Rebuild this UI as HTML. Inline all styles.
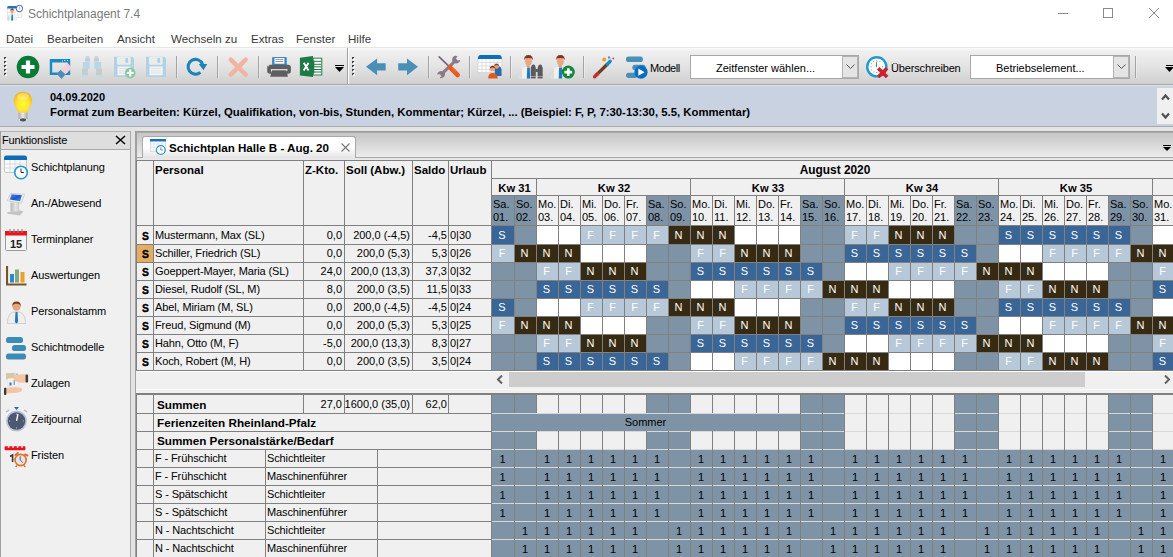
<!DOCTYPE html><html><head><meta charset="utf-8"><style>
*{margin:0;padding:0;box-sizing:border-box}
html,body{width:1173px;height:557px;overflow:hidden;background:#f0f0f0;font-family:"Liberation Sans", sans-serif;font-size:11px;color:#000;position:relative}
.a{position:absolute}
.t{position:absolute;white-space:nowrap;line-height:1}
.r{letter-spacing:-0.12px}
.b{font-weight:bold}

</style></head><body>
<div class="a" style="left:0;top:0;width:1173px;height:47px;background:#fff"></div>
<div class="a" style="left:0;top:47px;width:1173px;height:1px;background:#e6e6e6"></div>
<svg class="a" style="left:4px;top:2px" width="24" height="22" viewBox="0 0 24 22"><rect x="3.4" y="4.2" width="14.4" height="11.2" fill="#fbfbfb" stroke="#d8d8d8" stroke-width="0.6"/><path d="M3.2 8.5 V5.5 Q3.2 4 4.8 4 H17.5 V6.5 H3.2Z" fill="#1a72c0"/><path d="M3.6 10.5h14M3.6 13h14M7 6.5v9M10.5 6.5v9M14 6.5v9" stroke="#e2e2e2" stroke-width="0.5"/><circle cx="15.4" cy="6.5" r="3.2" fill="#fff" stroke="#3068a8" stroke-width="1"/><path d="M15.4 4.8v1.8h1" fill="none" stroke="#777" stroke-width="0.6"/><path d="M3.2 18.6 Q3.2 12.6 8.1 12.6 Q12.6 12.6 12.6 18.6Z" fill="#eeeeee"/><path d="M3.2 18.6 Q3.2 14.5 5 13.3 V18.6Z" fill="#d6d6d6"/><ellipse cx="8.1" cy="9.4" rx="1.5" ry="2.2" fill="#eaa684"/><path d="M6.3 9 Q6.2 6.3 8.1 6.3 Q10 6.3 9.9 9 Q9 7.8 8.1 7.9 Q7.1 7.8 6.3 9Z" fill="#8a4020"/><path d="M7.5 12.6h1.3l0.3 6h-1.9Z" fill="#1a80c0"/></svg>
<div class="t" style="left:28px;top:8px;font-size:12px;color:#7a7a7a">Schichtplanagent 7.4</div>
<div class="a" style="left:1058px;top:13px;width:10px;height:1px;background:#8a8a8a"></div>
<div class="a" style="left:1103px;top:8px;width:10px;height:10px;border:1px solid #8a8a8a"></div>
<svg class="a" style="left:1148px;top:7px" width="12" height="12" viewBox="0 0 12 12"><path d="M1 1L11 11M11 1L1 11" stroke="#8a8a8a" stroke-width="1"/></svg>
<div class="t" style="left:6px;top:33px;font-size:11.6px;color:#383838">Datei</div>
<div class="t" style="left:47px;top:33px;font-size:11.6px;color:#383838">Bearbeiten</div>
<div class="t" style="left:117px;top:33px;font-size:11.6px;color:#383838">Ansicht</div>
<div class="t" style="left:171px;top:33px;font-size:11.6px;color:#383838">Wechseln zu</div>
<div class="t" style="left:251px;top:33px;font-size:11.6px;color:#383838">Extras</div>
<div class="t" style="left:296px;top:33px;font-size:11.6px;color:#383838">Fenster</div>
<div class="t" style="left:348px;top:33px;font-size:11.6px;color:#383838">Hilfe</div>
<div class="a" style="left:0;top:48px;width:1173px;height:36px;background:linear-gradient(#fbfbfb,#f0f0f0 8%,#e2e2e2 55%,#d0d0d0)"></div>
<div class="a" style="left:0;top:84px;width:1173px;height:1px;background:#a8a8a8"></div>
<div class="a" style="left:0;top:85px;width:1173px;height:1px;background:#e0e0e0"></div>
<svg class="a" style="left:4px;top:52px" width="4" height="28" viewBox="0 0 4 28"><path d="M0 5h3l-3 3z" fill="#404040"/><path d="M3 5v3h-3z" fill="#fff"/><path d="M0 9h3l-3 3z" fill="#404040"/><path d="M3 9v3h-3z" fill="#fff"/><path d="M0 13h3l-3 3z" fill="#404040"/><path d="M3 13v3h-3z" fill="#fff"/><path d="M0 17h3l-3 3z" fill="#404040"/><path d="M3 17v3h-3z" fill="#fff"/><path d="M0 21h3l-3 3z" fill="#404040"/><path d="M3 21v3h-3z" fill="#fff"/></svg>
<svg class="a" style="left:352px;top:52px" width="4" height="28" viewBox="0 0 4 28"><path d="M0 5h3l-3 3z" fill="#404040"/><path d="M3 5v3h-3z" fill="#fff"/><path d="M0 9h3l-3 3z" fill="#404040"/><path d="M3 9v3h-3z" fill="#fff"/><path d="M0 13h3l-3 3z" fill="#404040"/><path d="M3 13v3h-3z" fill="#fff"/><path d="M0 17h3l-3 3z" fill="#404040"/><path d="M3 17v3h-3z" fill="#fff"/><path d="M0 21h3l-3 3z" fill="#404040"/><path d="M3 21v3h-3z" fill="#fff"/></svg>
<div class="a" style="left:176px;top:56px;width:1px;height:22px;background:#a4a4a4"></div><div class="a" style="left:177px;top:56px;width:1px;height:22px;background:rgba(255,255,255,0.35)"></div>
<div class="a" style="left:217px;top:56px;width:1px;height:22px;background:#a4a4a4"></div><div class="a" style="left:218px;top:56px;width:1px;height:22px;background:rgba(255,255,255,0.35)"></div>
<div class="a" style="left:258px;top:56px;width:1px;height:22px;background:#a4a4a4"></div><div class="a" style="left:259px;top:56px;width:1px;height:22px;background:rgba(255,255,255,0.35)"></div>
<div class="a" style="left:428px;top:56px;width:1px;height:22px;background:#a4a4a4"></div><div class="a" style="left:429px;top:56px;width:1px;height:22px;background:rgba(255,255,255,0.35)"></div>
<div class="a" style="left:469px;top:56px;width:1px;height:22px;background:#a4a4a4"></div><div class="a" style="left:470px;top:56px;width:1px;height:22px;background:rgba(255,255,255,0.35)"></div>
<div class="a" style="left:510px;top:56px;width:1px;height:22px;background:#a4a4a4"></div><div class="a" style="left:511px;top:56px;width:1px;height:22px;background:rgba(255,255,255,0.35)"></div>
<div class="a" style="left:583px;top:56px;width:1px;height:22px;background:#a4a4a4"></div><div class="a" style="left:584px;top:56px;width:1px;height:22px;background:rgba(255,255,255,0.35)"></div>
<div class="a" style="left:1135px;top:56px;width:1px;height:22px;background:#a4a4a4"></div><div class="a" style="left:1136px;top:56px;width:1px;height:22px;background:rgba(255,255,255,0.35)"></div>
<div class="a" style="left:347px;top:48px;width:1px;height:36px;background:#a0a0a0"></div><div class="a" style="left:348px;top:48px;width:1px;height:36px;background:#fff"></div>
<svg class="a" style="left:16px;top:55px" width="24" height="24" viewBox="0 0 24 24"><circle cx="12" cy="12" r="11.3" fill="#087a36"/><path d="M12 5.5v13M5.5 12h13" stroke="#fff" stroke-width="4.2"/></svg>
<svg class="a" style="left:46px;top:52px" width="30" height="30" viewBox="0 0 30 30"><path fill-rule="evenodd" d="M3.8 7H24.2V22.9H3.8Z M6.2 10.5V20.5H21.8V10.5Z" fill="#1a8ac4"/><path d="M16 9h1M18 8.5h1.5M21 8.5h1" stroke="#d8eef8" stroke-width="0.8"/><path d="M14.5 17.8L21.5 11L26.1 15.9L19.4 22.6Z" fill="#f5d0dc"/><path d="M10.8 22.1L14.5 17.8L19.4 22.6L15.6 26.9Z" fill="#4a8eb8"/></svg>
<svg class="a" style="left:78px;top:52px" width="30" height="30" viewBox="0 0 30 30"><rect x="7.5" y="4" width="4" height="2" rx="1" fill="#c0dcea"/><rect x="16.4" y="4" width="4" height="2" rx="1" fill="#c0dcea"/><rect x="7" y="5.7" width="5" height="4" rx="1.5" fill="#c8cccf"/><rect x="16" y="5.7" width="5" height="4" rx="1.5" fill="#c8cccf"/><rect x="4.8" y="10" width="7" height="6.8" fill="#b8d6e6"/><rect x="16.2" y="10" width="7" height="6.8" fill="#b8d6e6"/><rect x="11.8" y="11" width="4.4" height="5" fill="#d8e6ee"/><rect x="4" y="16.7" width="6" height="6.5" fill="#c8cccf"/><rect x="18" y="16.7" width="6" height="6.5" fill="#c8cccf"/><rect x="3.5" y="22.9" width="6.7" height="2.2" rx="1" fill="#c0dcea"/><rect x="17.5" y="22.9" width="7.3" height="2.2" rx="1" fill="#c0dcea"/></svg>
<svg class="a" style="left:110px;top:52px" width="30" height="30" viewBox="0 0 30 30"><path d="M4 4.8H22.5L24 6.5V25H4Z" fill="#b2d2e4"/><rect x="7" y="4.8" width="13.7" height="7.9" rx="1" fill="#e8ecee"/><rect x="15.3" y="6" width="2.7" height="4.8" fill="#b2d2e4"/><rect x="7.5" y="14.5" width="13.2" height="8.7" fill="#f2f4f6"/><path d="M9 16.5h10M9 18.8h10M9 21h10" stroke="#dcdcdc" stroke-width="0.8"/><circle cx="20.2" cy="21" r="5.4" fill="#8cc8a2"/><path d="M20.2 17.6v6.8M16.8 21h6.8" stroke="#fff" stroke-width="2.2"/></svg>
<svg class="a" style="left:142px;top:52px" width="30" height="30" viewBox="0 0 30 30"><path d="M4 4.8H22.5L24 6.5V25H4Z" fill="#b2d2e4"/><rect x="7" y="4.8" width="13.7" height="7.9" rx="1" fill="#e8ecee"/><rect x="15.3" y="6" width="2.7" height="4.8" fill="#b2d2e4"/><rect x="7.5" y="14.5" width="13.2" height="8.7" fill="#f2f4f6"/><path d="M9 16.5h10M9 18.8h10M9 21h10" stroke="#dcdcdc" stroke-width="0.8"/></svg>
<svg class="a" style="left:182px;top:52px" width="30" height="30" viewBox="0 0 30 30"><path d="M18.35 20.38 A7.4 7.4 0 1 1 20.45 12.27" fill="none" stroke="#1a84b8" stroke-width="3.1"/><path d="M16.8 12.1L25.3 12.1L21.4 18.2Z" fill="#1a84b8"/></svg>
<svg class="a" style="left:224px;top:52px" width="30" height="30" viewBox="0 0 30 30"><path d="M6.8 7.6L21.7 22.6M21.7 7.6L6.8 22.6" stroke="#f0b4a0" stroke-width="4.4" stroke-linecap="round"/></svg>
<svg class="a" style="left:262px;top:52px" width="34" height="30" viewBox="0 0 34 30"><rect x="10.1" y="4.9" width="14.7" height="8.5" rx="1.2" fill="#3a8ac6"/><rect x="12.5" y="6" width="9.9" height="5.7" fill="#fff"/><path d="M13.4 7.4h8M13.4 9.5h8" stroke="#8a8a8a" stroke-width="0.9"/><rect x="5.2" y="12.8" width="23.7" height="9" rx="2.8" fill="#5e5e5e"/><rect x="6" y="13.2" width="1.2" height="1.2" fill="#ddd"/><path d="M8.7 17.2H25.6L24.5 21H9.8Z" fill="#fff"/><path d="M10 18.3H24.5L25.9 24.8H8.2Z" fill="#5e5e5e"/></svg>
<svg class="a" style="left:298px;top:52px" width="30" height="30" viewBox="0 0 30 30"><rect x="15" y="6.2" width="8.8" height="16.8" fill="#fff" stroke="#2a8050" stroke-width="1"/><path d="M15 9.3h8.5M15 12.3h8.5M15 14.8h8.5M15 17.5h8.5M15 20h8.5" stroke="#1e7a45" stroke-width="1"/><path d="M15.5 8.5v13" stroke="#1e7a45" stroke-width="1.6"/><path d="M1.9 5.7L15 4.1V25.1L1.9 23.5Z" fill="#1e7a45"/><path d="M5.7 10.8L10.6 18.6M10.6 10.8L5.7 18.6" stroke="#fff" stroke-width="1.9"/></svg>
<div class="a" style="left:335px;top:65px;width:9px;height:1px;background:#000"></div>
<svg class="a" style="left:335px;top:67px" width="9" height="5" viewBox="0 0 9 5"><path d="M0 0h9L4.5 5z" fill="#000"/></svg>
<svg class="a" style="left:362px;top:52px" width="60" height="30" viewBox="0 0 60 30"><path d="M4 14.8L15.1 6.5V11.3H23.7V18.4H15.1V23.2Z" fill="#4a90b6"/><path d="M56 14.8L45 6.5V11.3H36.2V18.4H45V23.2Z" fill="#4a90b6"/></svg>
<svg class="a" style="left:434px;top:52px" width="30" height="30" viewBox="0 0 30 30"><path d="M5.2 4.8L15 14.4" stroke="#78687e" stroke-width="1.7" stroke-linecap="round"/><path d="M21 3.8 A4.2 4.2 0 0 0 18.4 9.4 L8.3 19.2 A4.2 4.2 0 0 0 3 22.5 L6 22.3 L7.4 24.2 L5.6 26 A4.2 4.2 0 0 0 11 21 L21 11.3 A4.2 4.2 0 0 0 26.3 8 L23.4 8.4 L22 6.3 L23.6 4.3 A4.2 4.2 0 0 0 21 3.8Z" fill="#8a7a88"/><path d="M16 15.4L23.6 23" stroke="#e85a1e" stroke-width="4.6" stroke-linecap="round"/><path d="M18.2 16.6l3.6 3.6M19.3 15.8l3.6 3.6" stroke="#f08a50" stroke-width="0.6"/></svg>
<svg class="a" style="left:476px;top:52px" width="30" height="30" viewBox="0 0 30 30"><rect x="1.9" y="5" width="23.9" height="15.6" rx="1.2" fill="#fff" stroke="#cfcfcf" stroke-width="0.8"/><path d="M1.9 7 Q1.9 3.1 4.5 3.1 H23.2 Q25.8 3.1 25.8 7 Z" fill="#0a70b8"/><path d="M2.3 10.5h23M2.3 14h23M2.3 17.3h23M6 7v13.3M10 7v13.3M14 7v13.3M18 7v13.3M22 7v13.3" stroke="#d8d8d8" stroke-width="0.8"/><path d="M18.8 17.8 Q18.8 14 21.5 14 Q25.5 14 25.5 17.8 V24 H18.8Z" fill="#2a6ab0"/><circle cx="20.6" cy="14.4" r="2.4" fill="#e8a07a"/><path d="M18.2 13.8 Q18.5 11.5 20.8 11.6 Q23 11.8 23 14 Q21.5 12.6 18.2 13.8Z" fill="#8a4a2a"/><path d="M12.3 26.4 Q12 20.9 16.5 20.9 Q21.6 20.9 21.8 26.4Z" fill="#e05a20"/><circle cx="16.6" cy="17" r="2.5" fill="#eaa882"/><path d="M13.8 18.5 Q13.5 13.5 16.6 13.8 Q19.6 13.8 19.4 18.5 L18.8 16 Q16.6 14.8 14.4 16Z" fill="#7a3a1e"/></svg>
<svg class="a" style="left:516px;top:50px" width="30" height="30" viewBox="0 0 30 30"><path d="M3.7 28.4 Q3.2 17 10.2 16.7 Q16.7 17 16.7 28.4Z" fill="#f0f0f0"/><path d="M3.7 28.4 Q3.2 20 6 18.2 L6 28.4Z" fill="#dcdcdc"/><rect x="10.6" y="14" width="3.2" height="3" fill="#e8a080"/><ellipse cx="12.5" cy="11.6" rx="3.4" ry="4" fill="#eaa684"/><path d="M8 10.5 Q7.8 4.9 12.5 4.9 Q17.2 4.9 17 10.5 L16 8.6 Q12.5 7.6 9 8.6Z" fill="#7a3a1e"/><path d="M11.2 17.5h2.6l0.4 10.9h-3.4Z" fill="#1e7ab8"/><path d="M15.8 15.2 Q16.5 14.4 17.5 14.4 Q18.6 14.4 19 15.6 L19.8 18 V26.5 H14.7 V18Z" fill="#5a5a5e"/><path d="M22.6 15.2 Q23.3 14.4 24.3 14.4 Q25.4 14.4 25.8 15.6 L26.7 18 V26.5 H21.6 V18Z" fill="#5a5a5e"/><rect x="19.6" y="19" width="2.2" height="3" fill="#5a5a5e"/><rect x="14.7" y="27" width="5" height="1.4" fill="#5a5a5e"/><rect x="21.6" y="27" width="5" height="1.4" fill="#5a5a5e"/></svg>
<svg class="a" style="left:548px;top:50px" width="30" height="30" viewBox="0 0 30 30"><path d="M3.6 28.4 Q3.2 17 10.2 16.7 Q16.9 17 16.9 28.4Z" fill="#f0f0f0"/><path d="M3.6 28.4 Q3.2 20 6 18.2 L6 28.4Z" fill="#dcdcdc"/><rect x="10.6" y="14" width="3.2" height="3" fill="#e8a080"/><ellipse cx="12.4" cy="11.6" rx="3.4" ry="4" fill="#eaa684"/><path d="M8 10.5 Q7.8 4.9 12.4 4.9 Q17.1 4.9 16.9 10.5 L15.9 8.6 Q12.4 7.6 8.9 8.6Z" fill="#7a3a1e"/><path d="M11.1 17.5h2.8l0.4 10.9h-3.6Z" fill="#1e7ab8"/><circle cx="20.3" cy="22.1" r="6.5" fill="#108a3a"/><path d="M20.3 18.2v7.8M16.4 22.1h7.8" stroke="#fff" stroke-width="2.6"/></svg>
<svg class="a" style="left:590px;top:52px" width="30" height="30" viewBox="0 0 30 30"><path d="M6 23.4L17.5 12" stroke="#6e3e1e" stroke-width="3.4"/><path d="M4.6 24.8L7.6 21.8" stroke="#c43030" stroke-width="3.4" stroke-linecap="round"/><path d="M17.3 12.2L20.2 9.3" stroke="#1a8ac4" stroke-width="3.4" stroke-linecap="round"/><circle cx="14.2" cy="7.4" r="2" fill="#f0a020"/><circle cx="19.1" cy="5.5" r="1.2" fill="#3a9ad0"/><circle cx="23.2" cy="6.5" r="1" fill="#e04040"/></svg>
<svg class="a" style="left:622px;top:52px" width="34" height="30" viewBox="0 0 34 30"><rect x="4" y="4.6" width="16.9" height="5.5" rx="2.6" fill="#4a90b6"/><rect x="10.3" y="12.8" width="13.3" height="5.3" rx="2.6" fill="#4a90b6"/><rect x="4" y="20.7" width="11.5" height="5.2" rx="2.6" fill="#4a90b6"/><circle cx="19" cy="20.2" r="6.6" fill="#0a6ec0"/><path d="M16.3 16.6L22.6 20.2L16.3 23.7Z" fill="#fff"/></svg>
<div class="t" style="left:650px;top:63px;font-size:11px;letter-spacing:-0.45px">Modell</div>
<div class="a" style="left:690px;top:55px;width:169px;height:24px;background:#fff;border:1px solid #a8a8a8"></div><div class="a" style="left:842px;top:56px;width:16px;height:22px;background:#e4e4e4;border:1px solid #b4b4b4"></div><svg class="a" style="left:846px;top:64px" width="9" height="6" viewBox="0 0 9 6"><path d="M0.5 0.5L4.5 4.5L8.5 0.5" fill="none" stroke="#555" stroke-width="1"/></svg><div class="t" style="left:716px;top:63px;font-size:11px">Zeitfenster wählen...</div>
<svg class="a" style="left:862px;top:52px" width="30" height="30" viewBox="0 0 30 30"><circle cx="14.8" cy="14.8" r="9.6" fill="#fff" stroke="#1a9ad0" stroke-width="2.4"/><path d="M14.8 8.5v1M14.8 20v1M8.5 14.8h1M20 14.8h1M11.5 9.3l0.5 0.8M18 9.3l-0.5 0.8M9.3 11.5l0.8 0.5M9.3 18l0.8 -0.5M11.5 20.3l0.5 -0.8" stroke="#555" stroke-width="0.7"/><path d="M14.5 10.2V15" stroke="#777" stroke-width="1"/><path d="M16.2 16.2L25.1 25.1M25.1 16.2L16.2 25.1" stroke="#d0202a" stroke-width="3.6"/></svg>
<div class="t" style="left:891px;top:63px;font-size:11px;letter-spacing:-0.15px">Überschreiben</div>
<div class="a" style="left:970px;top:55px;width:160px;height:24px;background:#fff;border:1px solid #a8a8a8"></div><div class="a" style="left:1113px;top:56px;width:16px;height:22px;background:#e4e4e4;border:1px solid #b4b4b4"></div><svg class="a" style="left:1117px;top:64px" width="9" height="6" viewBox="0 0 9 6"><path d="M0.5 0.5L4.5 4.5L8.5 0.5" fill="none" stroke="#555" stroke-width="1"/></svg><div class="t" style="left:996px;top:63px;font-size:11px">Betriebselement...</div>
<div class="a" style="left:1166px;top:65px;width:8px;height:1px;background:#000"></div>
<svg class="a" style="left:1165px;top:67px" width="9" height="5" viewBox="0 0 9 5"><path d="M0 0h9L4.5 5z" fill="#000"/></svg>
<div class="a" style="left:0;top:86px;width:1173px;height:40px;background:#c8d2e0"></div>
<div class="a" style="left:0;top:126px;width:1173px;height:1px;background:#a9a9a9"></div>
<svg class="a" style="left:13px;top:91px" width="20" height="31" viewBox="0 0 20 31"><defs><radialGradient id="bg" cx="0.5" cy="0.6" r="0.6"><stop offset="0" stop-color="#ffff20"/><stop offset="0.55" stop-color="#ffe23a"/><stop offset="1" stop-color="#f2b21c"/></radialGradient><linearGradient id="bs" x1="0" x2="1"><stop offset="0" stop-color="#a8a8a8"/><stop offset="0.5" stop-color="#f4f4f4"/><stop offset="1" stop-color="#a0a0a0"/></linearGradient></defs><path d="M10 0.8 C4.2 0.8 0.8 4.8 0.8 9.6 C0.8 14 3.6 16.5 5.2 21.8 L14.6 21.8 C16.2 16.5 19.2 14 19.2 9.6 C19.2 4.8 15.8 0.8 10 0.8Z" fill="url(#bg)"/><ellipse cx="10" cy="5.5" rx="6" ry="3.5" fill="#fff8c0" opacity="0.35"/><rect x="5.6" y="21.8" width="8.8" height="6.2" fill="url(#bs)"/><path d="M5.6 24h8.8M5.6 26h8.8" stroke="#c0c0c0" stroke-width="0.5"/><ellipse cx="10" cy="28.8" rx="3" ry="1.6" fill="#505050"/></svg>
<div class="t b" style="left:50px;top:92px;font-size:11px">04.09.2020</div>
<div class="t b" style="left:50px;top:106.5px;font-size:11.35px">Format zum Bearbeiten: Kürzel, Qualifikation, von-bis, Stunden, Kommentar; Kürzel, ... (Beispiel: F, P, 7:30-13:30, 5.5, Kommentar)</div>
<div class="a" style="left:1157px;top:88px;width:16px;height:36px;background:#f0f0f0"></div>
<svg class="a" style="left:1161px;top:93px" width="9" height="8" viewBox="0 0 9 8"><path d="M1 6.5L4.5 2.5L8 6.5" fill="none" stroke="#505050" stroke-width="2.2"/></svg>
<svg class="a" style="left:1161px;top:112px" width="9" height="8" viewBox="0 0 9 8"><path d="M1 1.5L4.5 5.5L8 1.5" fill="none" stroke="#505050" stroke-width="2.2"/></svg>
<div class="a" style="left:0;top:127px;width:1173px;height:430px;background:#e3e3e3"></div>
<div class="a" style="left:0;top:131px;width:131px;height:426px;background:#f0f0f0;border-right:1px solid #a8a8a8;border-top:1px solid #b0b0b0"></div>
<div class="a" style="left:0;top:132px;width:130px;height:17px;background:#dedede"></div>
<div class="a" style="left:0;top:149px;width:130px;height:1px;background:#a8a8a8"></div>
<div class="t" style="left:2px;top:135px;font-size:11px;letter-spacing:-0.15px">Funktionsliste</div>
<svg class="a" style="left:115px;top:135px" width="11" height="10" viewBox="0 0 11 10"><path d="M1 1L10 9M10 1L1 9" stroke="#000" stroke-width="1.4"/></svg>
<div class="t" style="left:31px;top:162px;font-size:11px;letter-spacing:-0.1px">Schichtplanung</div>
<div class="t" style="left:31px;top:198px;font-size:11px;letter-spacing:-0.1px">An-/Abwesend</div>
<div class="t" style="left:31px;top:234px;font-size:11px;letter-spacing:-0.1px">Terminplaner</div>
<div class="t" style="left:31px;top:270px;font-size:11px;letter-spacing:-0.1px">Auswertungen</div>
<div class="t" style="left:31px;top:306px;font-size:11px;letter-spacing:-0.1px">Personalstamm</div>
<div class="t" style="left:31px;top:342px;font-size:11px;letter-spacing:-0.1px">Schichtmodelle</div>
<div class="t" style="left:31px;top:378px;font-size:11px;letter-spacing:-0.1px">Zulagen</div>
<div class="t" style="left:31px;top:414px;font-size:11px;letter-spacing:-0.1px">Zeitjournal</div>
<div class="t" style="left:31px;top:450px;font-size:11px;letter-spacing:-0.1px">Fristen</div>
<div class="a" style="left:0;top:131px;width:1px;height:426px;background:#a0a0a0"></div>
<svg class="a" style="left:4px;top:155px" width="25" height="25" viewBox="0 0 25 25"><rect x="0.5" y="2.5" width="22" height="15" rx="1.5" fill="#fbfbfb" stroke="#c8c8c8"/><path d="M0 3 Q0 0.5 2.5 0.5 H20.5 Q23 0.5 23 3 V5 H0Z" fill="#0f6cb6"/><path d="M1 9h21M1 13h21M6 5v12M11 5v12M16 5v12" stroke="#d4d4d4" stroke-width="0.8"/><circle cx="17" cy="17.5" r="6.3" fill="#fff" stroke="#1a97cc" stroke-width="1.6"/><path d="M17 13.5v4h3" fill="none" stroke="#333" stroke-width="1"/></svg>
<svg class="a" style="left:6px;top:192px" width="20" height="24" viewBox="0 0 20 24"><defs><linearGradient id="ks" x1="0" y1="0" x2="1" y2="1"><stop offset="0" stop-color="#5a8ae8"/><stop offset="0.5" stop-color="#1f56d0"/><stop offset="1" stop-color="#3a9ae0"/></linearGradient><linearGradient id="kp" x1="0" x2="1"><stop offset="0" stop-color="#b8b8b8"/><stop offset="0.6" stop-color="#e6e6e6"/><stop offset="1" stop-color="#c8c8c8"/></linearGradient></defs><path d="M1 20.2 L13.5 18.2 L17.5 19.6 L13.8 23.4 L1.5 21.8Z" fill="#c4c4c4"/><rect x="4.5" y="10.4" width="8.6" height="9" fill="url(#kp)"/><path d="M4.5 1.3 L18.6 2.3 L15.4 11.1 L1.3 8.8Z" fill="#eeeeee" stroke="#bdbdbd" stroke-width="0.6"/><path d="M5.5 2.3 L15.9 3.3 L14.1 9.3 L3.8 7.6Z" fill="url(#ks)"/></svg>
<svg class="a" style="left:5px;top:229px" width="22" height="22" viewBox="0 0 22 22"><rect x="0.5" y="5.5" width="21" height="16" rx="1" fill="#f4f4f4" stroke="#9a9a9a"/><rect x="0" y="2" width="22" height="4.5" fill="#e8141e"/><path d="M5 0v4M9 0v4M13 0v4M17 0v4" stroke="#888" stroke-width="1.2"/><text x="11" y="19" text-anchor="middle" font-family="Liberation Sans" font-weight="bold" font-size="11" fill="#222">15</text></svg>
<svg class="a" style="left:6px;top:266px" width="21" height="20" viewBox="0 0 21 20"><path d="M1 0V18.5H20.5" fill="none" stroke="#7a5224" stroke-width="2.2"/><rect x="4" y="8" width="4" height="8.5" fill="#2a8ac4"/><rect x="9" y="3.5" width="4" height="13" fill="#84a884"/><rect x="14.5" y="6" width="4" height="10.5" fill="#eaa02a"/></svg>
<svg class="a" style="left:7px;top:300px" width="19" height="24" viewBox="0 0 19 24"><path d="M0.5 23.5 Q0 12 9.5 11.5 Q19 12 18.5 23.5Z" fill="#eeeeee" stroke="#c8c8c8" stroke-width="0.8"/><circle cx="9.5" cy="6.5" r="4.2" fill="#e8a47a"/><path d="M5.2 6 Q5 1.5 9.5 1.5 Q14 1.5 13.8 6 Q12.5 3.5 9.5 3.8 Q6.5 3.5 5.2 6Z" fill="#7a3c1a"/><path d="M8.5 12 h2 l0.6 10 l-1.6 1.5 l-1.6 -1.5Z" fill="#1f7ab8"/></svg>
<svg class="a" style="left:6px;top:337px" width="21" height="23" viewBox="0 0 21 23"><rect x="0" y="0" width="17" height="6" rx="2.5" fill="#3c8ab6"/><rect x="6" y="8" width="14" height="6" rx="2.5" fill="#3c8ab6"/><rect x="0" y="16.5" width="20" height="6" rx="2.5" fill="#3c8ab6"/></svg>
<svg class="a" style="left:4px;top:372px" width="25" height="24" viewBox="0 0 25 24"><path d="M1.8 1.2 L10.5 0.8 L11 7 L2.2 7.5Z" fill="#d6c8a2"/><path d="M3.5 6.5 L14.6 5.5 L14.8 14.4 L4 14.8Z" fill="#f4f2ee" stroke="#d8d8d8" stroke-width="0.4"/><rect x="5.5" y="10.5" width="2" height="3" fill="#4a70b0"/><rect x="9.5" y="8" width="1.5" height="5" fill="#8aa8c8"/><rect x="11.5" y="1.5" width="2.5" height="2.5" fill="#9ac0e8"/><path d="M9.5 4.5 Q13 1.5 22 2.5 L22 10.5 Q16 11.5 12 9.5 Q9 8 9.5 4.5Z" fill="#f2c6a4"/><rect x="21.6" y="2.6" width="2.5" height="8" rx="0.8" fill="#3a3a3a"/><path d="M2.5 16 Q10 14.8 17 15.8 Q19.5 17.5 16.5 20 Q10 21.8 2.5 21.2Z" fill="#f2c6a4"/><rect x="0" y="15.8" width="2.4" height="7.2" rx="0.8" fill="#3a3a3a"/></svg>
<svg class="a" style="left:5px;top:407px" width="23" height="25" viewBox="0 0 23 25"><path d="M9 0h5l-2.5 3z" fill="#2a6aa8"/><path d="M1 5 L4 3 M22 5 L19 3" stroke="#a8b8d0" stroke-width="1.5"/><circle cx="11.5" cy="14" r="10.5" fill="#b8c4d8"/><circle cx="11.5" cy="14" r="8.8" fill="#4c5870"/><path d="M11.5 14 L13 7" stroke="#fff" stroke-width="1.3"/><path d="M11.5 6.5v1.2M11.5 20.3v1.2M4 14h1.2M17.8 14h1.2" stroke="#ccd" stroke-width="0.8"/></svg>
<svg class="a" style="left:2px;top:442px" width="28" height="28" viewBox="0 0 28 28"><rect x="2.6" y="4.3" width="20.8" height="4" rx="0.8" fill="#e8101e"/><path d="M5.8 4.3h1.6v1.4h-1.6zM10.3 4.3h1.6v1.4h-1.6zM14.8 4.3h1.6v1.4h-1.6zM19.2 4.3h1.6v1.4h-1.6z" fill="#fff"/><path d="M8 14.5 L10.6 13 V20" fill="none" stroke="#3a3a3a" stroke-width="1.6"/><path d="M13.5 13 L15.8 11 M23 12.5 L25.5 13.5" stroke="#e07028" stroke-width="2" stroke-linecap="round"/><path d="M15 23.5 L13.7 25 M22 23.5 L23.3 25" stroke="#e07028" stroke-width="1.5"/><circle cx="18.6" cy="18" r="5.6" fill="#e4e4e4" stroke="#e07028" stroke-width="1.6"/><path d="M18.2 14.2 V18 L20.8 20.5" fill="none" stroke="#555" stroke-width="0.9"/></svg>
<div class="a" style="left:135px;top:131px;width:1038px;height:426px;background:#f0f0f0;border-left:2px solid #a0a0a0;border-top:1px solid #999"></div>
<div class="a" style="left:137px;top:132px;width:1036px;height:25px;background:linear-gradient(#c4c4c4,#ececec)"></div>
<div class="a" style="left:137px;top:132px;width:1036px;height:1px;background:#ababab"></div>
<div class="a" style="left:137px;top:157px;width:1036px;height:1px;background:#a8a8a8"></div>
<div class="a" style="left:137px;top:158px;width:1036px;height:2px;background:#e8e8e8"></div>
<div class="a" style="left:142px;top:136px;width:214px;height:22px;background:linear-gradient(#ffffff,#ffffff 50%,#e4e4e4);border:1px solid #a8a8a8;border-bottom:none;border-radius:3px 3px 0 0"></div>
<svg class="a" style="left:150px;top:139px" width="20" height="18" viewBox="0 0 20 18"><rect x="0.5" y="1.5" width="15" height="11" fill="#f8f8f8" stroke="#ddd"/><rect x="0" y="0" width="16" height="2.5" fill="#1670c0"/><path d="M1 5h14M1 8h14M4 2v11M8 2v11M12 2v11" stroke="#dde" stroke-width="0.6"/><circle cx="10.8" cy="11" r="4.4" fill="#fff" stroke="#2a9ad0" stroke-width="1.3"/><path d="M10.8 8.5v2.5h2" fill="none" stroke="#666" stroke-width="0.8"/></svg>
<div class="t b" style="left:169px;top:141.5px;font-size:11.6px">Schichtplan Halle B - Aug. 20</div>
<svg class="a" style="left:341px;top:143px" width="9" height="9" viewBox="0 0 9 9"><path d="M0.5 0.5L8.5 8.5M8.5 0.5L0.5 8.5" stroke="#777" stroke-width="1.1"/></svg>
<div class="a" style="left:1163px;top:145px;width:8px;height:1px;background:#000"></div>
<svg class="a" style="left:1163px;top:147px" width="8" height="4" viewBox="0 0 8 4"><path d="M0 0h8L4 4z" fill="#000"/></svg>
<div class="a" style="left:136px;top:160px;width:1037px;height:397px;background:#f0f0f0"></div>
<div class="a" style="left:136px;top:160px;width:1037px;height:1px;background:#808080"></div>
<div class="a" style="left:136px;top:160px;width:1px;height:210px;background:#808080"></div>
<div class="a" style="left:153px;top:160px;width:1px;height:210px;background:#808080"></div>
<div class="a" style="left:303px;top:160px;width:1px;height:210px;background:#808080"></div>
<div class="a" style="left:344px;top:160px;width:1px;height:210px;background:#808080"></div>
<div class="a" style="left:412px;top:160px;width:1px;height:210px;background:#808080"></div>
<div class="a" style="left:448px;top:160px;width:1px;height:210px;background:#808080"></div>
<div class="a" style="left:491px;top:160px;width:1px;height:210px;background:#808080"></div>
<div class="t b" style="left:155px;top:165px;font-size:11.5px">Personal</div>
<div class="t b" style="left:305px;top:165px;font-size:11.5px">Z-Kto.</div>
<div class="t b" style="left:346px;top:165px;font-size:11.5px">Soll (Abw.)</div>
<div class="t b" style="left:414px;top:165px;font-size:11.5px">Saldo</div>
<div class="t b" style="left:450px;top:165px;font-size:11.5px">Urlaub</div>
<div class="t b" style="left:494px;top:165px;width:682px;text-align:center;font-size:11.9px">August 2020</div>
<div class="a" style="left:491px;top:178px;width:682px;height:1px;background:#808080"></div>
<div class="a" style="left:491px;top:195px;width:682px;height:1px;background:#808080"></div>
<div class="a" style="left:491px;top:178px;width:1px;height:17px;background:#808080"></div>
<div class="t b" style="left:492px;top:183px;width:45px;text-align:center;font-size:11.2px">Kw 31</div>
<div class="a" style="left:536px;top:178px;width:1px;height:17px;background:#808080"></div>
<div class="t b" style="left:537px;top:183px;width:154px;text-align:center;font-size:11.2px">Kw 32</div>
<div class="a" style="left:690px;top:178px;width:1px;height:17px;background:#808080"></div>
<div class="t b" style="left:691px;top:183px;width:154px;text-align:center;font-size:11.2px">Kw 33</div>
<div class="a" style="left:844px;top:178px;width:1px;height:17px;background:#808080"></div>
<div class="t b" style="left:845px;top:183px;width:154px;text-align:center;font-size:11.2px">Kw 34</div>
<div class="a" style="left:998px;top:178px;width:1px;height:17px;background:#808080"></div>
<div class="t b" style="left:999px;top:183px;width:154px;text-align:center;font-size:11.2px">Kw 35</div>
<div class="a" style="left:1152px;top:178px;width:1px;height:17px;background:#808080"></div>
<div class="a" style="left:492px;top:196px;width:22px;height:29px;background:#7e93a6"></div>
<div class="a" style="left:491px;top:196px;width:1px;height:29px;background:#808080"></div>
<div class="t" style="left:493px;top:199px;font-size:11px">Sa.</div>
<div class="t" style="left:493px;top:212px;font-size:11px">01.</div>
<div class="a" style="left:515px;top:196px;width:21px;height:29px;background:#7e93a6"></div>
<div class="a" style="left:514px;top:196px;width:1px;height:29px;background:#808080"></div>
<div class="t" style="left:516px;top:199px;font-size:11px">So.</div>
<div class="t" style="left:516px;top:212px;font-size:11px">02.</div>
<div class="a" style="left:537px;top:196px;width:21px;height:29px;background:#f0f0f0"></div>
<div class="a" style="left:536px;top:196px;width:1px;height:29px;background:#808080"></div>
<div class="t" style="left:538px;top:199px;font-size:11px">Mo.</div>
<div class="t" style="left:538px;top:212px;font-size:11px">03.</div>
<div class="a" style="left:559px;top:196px;width:21px;height:29px;background:#f0f0f0"></div>
<div class="a" style="left:558px;top:196px;width:1px;height:29px;background:#808080"></div>
<div class="t" style="left:560px;top:199px;font-size:11px">Di.</div>
<div class="t" style="left:560px;top:212px;font-size:11px">04.</div>
<div class="a" style="left:581px;top:196px;width:21px;height:29px;background:#f0f0f0"></div>
<div class="a" style="left:580px;top:196px;width:1px;height:29px;background:#808080"></div>
<div class="t" style="left:582px;top:199px;font-size:11px">Mi.</div>
<div class="t" style="left:582px;top:212px;font-size:11px">05.</div>
<div class="a" style="left:603px;top:196px;width:21px;height:29px;background:#f0f0f0"></div>
<div class="a" style="left:602px;top:196px;width:1px;height:29px;background:#808080"></div>
<div class="t" style="left:604px;top:199px;font-size:11px">Do.</div>
<div class="t" style="left:604px;top:212px;font-size:11px">06.</div>
<div class="a" style="left:625px;top:196px;width:21px;height:29px;background:#f0f0f0"></div>
<div class="a" style="left:624px;top:196px;width:1px;height:29px;background:#808080"></div>
<div class="t" style="left:626px;top:199px;font-size:11px">Fr.</div>
<div class="t" style="left:626px;top:212px;font-size:11px">07.</div>
<div class="a" style="left:647px;top:196px;width:21px;height:29px;background:#7e93a6"></div>
<div class="a" style="left:646px;top:196px;width:1px;height:29px;background:#808080"></div>
<div class="t" style="left:648px;top:199px;font-size:11px">Sa.</div>
<div class="t" style="left:648px;top:212px;font-size:11px">08.</div>
<div class="a" style="left:669px;top:196px;width:21px;height:29px;background:#7e93a6"></div>
<div class="a" style="left:668px;top:196px;width:1px;height:29px;background:#808080"></div>
<div class="t" style="left:670px;top:199px;font-size:11px">So.</div>
<div class="t" style="left:670px;top:212px;font-size:11px">09.</div>
<div class="a" style="left:691px;top:196px;width:21px;height:29px;background:#f0f0f0"></div>
<div class="a" style="left:690px;top:196px;width:1px;height:29px;background:#808080"></div>
<div class="t" style="left:692px;top:199px;font-size:11px">Mo.</div>
<div class="t" style="left:692px;top:212px;font-size:11px">10.</div>
<div class="a" style="left:713px;top:196px;width:21px;height:29px;background:#f0f0f0"></div>
<div class="a" style="left:712px;top:196px;width:1px;height:29px;background:#808080"></div>
<div class="t" style="left:714px;top:199px;font-size:11px">Di.</div>
<div class="t" style="left:714px;top:212px;font-size:11px">11.</div>
<div class="a" style="left:735px;top:196px;width:21px;height:29px;background:#f0f0f0"></div>
<div class="a" style="left:734px;top:196px;width:1px;height:29px;background:#808080"></div>
<div class="t" style="left:736px;top:199px;font-size:11px">Mi.</div>
<div class="t" style="left:736px;top:212px;font-size:11px">12.</div>
<div class="a" style="left:757px;top:196px;width:21px;height:29px;background:#f0f0f0"></div>
<div class="a" style="left:756px;top:196px;width:1px;height:29px;background:#808080"></div>
<div class="t" style="left:758px;top:199px;font-size:11px">Do.</div>
<div class="t" style="left:758px;top:212px;font-size:11px">13.</div>
<div class="a" style="left:779px;top:196px;width:21px;height:29px;background:#f0f0f0"></div>
<div class="a" style="left:778px;top:196px;width:1px;height:29px;background:#808080"></div>
<div class="t" style="left:780px;top:199px;font-size:11px">Fr.</div>
<div class="t" style="left:780px;top:212px;font-size:11px">14.</div>
<div class="a" style="left:801px;top:196px;width:21px;height:29px;background:#7e93a6"></div>
<div class="a" style="left:800px;top:196px;width:1px;height:29px;background:#808080"></div>
<div class="t" style="left:802px;top:199px;font-size:11px">Sa.</div>
<div class="t" style="left:802px;top:212px;font-size:11px">15.</div>
<div class="a" style="left:823px;top:196px;width:21px;height:29px;background:#7e93a6"></div>
<div class="a" style="left:822px;top:196px;width:1px;height:29px;background:#808080"></div>
<div class="t" style="left:824px;top:199px;font-size:11px">So.</div>
<div class="t" style="left:824px;top:212px;font-size:11px">16.</div>
<div class="a" style="left:845px;top:196px;width:21px;height:29px;background:#f0f0f0"></div>
<div class="a" style="left:844px;top:196px;width:1px;height:29px;background:#808080"></div>
<div class="t" style="left:846px;top:199px;font-size:11px">Mo.</div>
<div class="t" style="left:846px;top:212px;font-size:11px">17.</div>
<div class="a" style="left:867px;top:196px;width:21px;height:29px;background:#f0f0f0"></div>
<div class="a" style="left:866px;top:196px;width:1px;height:29px;background:#808080"></div>
<div class="t" style="left:868px;top:199px;font-size:11px">Di.</div>
<div class="t" style="left:868px;top:212px;font-size:11px">18.</div>
<div class="a" style="left:889px;top:196px;width:21px;height:29px;background:#f0f0f0"></div>
<div class="a" style="left:888px;top:196px;width:1px;height:29px;background:#808080"></div>
<div class="t" style="left:890px;top:199px;font-size:11px">Mi.</div>
<div class="t" style="left:890px;top:212px;font-size:11px">19.</div>
<div class="a" style="left:911px;top:196px;width:21px;height:29px;background:#f0f0f0"></div>
<div class="a" style="left:910px;top:196px;width:1px;height:29px;background:#808080"></div>
<div class="t" style="left:912px;top:199px;font-size:11px">Do.</div>
<div class="t" style="left:912px;top:212px;font-size:11px">20.</div>
<div class="a" style="left:933px;top:196px;width:21px;height:29px;background:#f0f0f0"></div>
<div class="a" style="left:932px;top:196px;width:1px;height:29px;background:#808080"></div>
<div class="t" style="left:934px;top:199px;font-size:11px">Fr.</div>
<div class="t" style="left:934px;top:212px;font-size:11px">21.</div>
<div class="a" style="left:955px;top:196px;width:21px;height:29px;background:#7e93a6"></div>
<div class="a" style="left:954px;top:196px;width:1px;height:29px;background:#808080"></div>
<div class="t" style="left:956px;top:199px;font-size:11px">Sa.</div>
<div class="t" style="left:956px;top:212px;font-size:11px">22.</div>
<div class="a" style="left:977px;top:196px;width:21px;height:29px;background:#7e93a6"></div>
<div class="a" style="left:976px;top:196px;width:1px;height:29px;background:#808080"></div>
<div class="t" style="left:978px;top:199px;font-size:11px">So.</div>
<div class="t" style="left:978px;top:212px;font-size:11px">23.</div>
<div class="a" style="left:999px;top:196px;width:21px;height:29px;background:#f0f0f0"></div>
<div class="a" style="left:998px;top:196px;width:1px;height:29px;background:#808080"></div>
<div class="t" style="left:1000px;top:199px;font-size:11px">Mo.</div>
<div class="t" style="left:1000px;top:212px;font-size:11px">24.</div>
<div class="a" style="left:1021px;top:196px;width:21px;height:29px;background:#f0f0f0"></div>
<div class="a" style="left:1020px;top:196px;width:1px;height:29px;background:#808080"></div>
<div class="t" style="left:1022px;top:199px;font-size:11px">Di.</div>
<div class="t" style="left:1022px;top:212px;font-size:11px">25.</div>
<div class="a" style="left:1043px;top:196px;width:21px;height:29px;background:#f0f0f0"></div>
<div class="a" style="left:1042px;top:196px;width:1px;height:29px;background:#808080"></div>
<div class="t" style="left:1044px;top:199px;font-size:11px">Mi.</div>
<div class="t" style="left:1044px;top:212px;font-size:11px">26.</div>
<div class="a" style="left:1065px;top:196px;width:21px;height:29px;background:#f0f0f0"></div>
<div class="a" style="left:1064px;top:196px;width:1px;height:29px;background:#808080"></div>
<div class="t" style="left:1066px;top:199px;font-size:11px">Do.</div>
<div class="t" style="left:1066px;top:212px;font-size:11px">27.</div>
<div class="a" style="left:1087px;top:196px;width:21px;height:29px;background:#f0f0f0"></div>
<div class="a" style="left:1086px;top:196px;width:1px;height:29px;background:#808080"></div>
<div class="t" style="left:1088px;top:199px;font-size:11px">Fr.</div>
<div class="t" style="left:1088px;top:212px;font-size:11px">28.</div>
<div class="a" style="left:1109px;top:196px;width:21px;height:29px;background:#7e93a6"></div>
<div class="a" style="left:1108px;top:196px;width:1px;height:29px;background:#808080"></div>
<div class="t" style="left:1110px;top:199px;font-size:11px">Sa.</div>
<div class="t" style="left:1110px;top:212px;font-size:11px">29.</div>
<div class="a" style="left:1131px;top:196px;width:21px;height:29px;background:#7e93a6"></div>
<div class="a" style="left:1130px;top:196px;width:1px;height:29px;background:#808080"></div>
<div class="t" style="left:1132px;top:199px;font-size:11px">So.</div>
<div class="t" style="left:1132px;top:212px;font-size:11px">30.</div>
<div class="a" style="left:1153px;top:196px;width:21px;height:29px;background:#f0f0f0"></div>
<div class="a" style="left:1152px;top:196px;width:1px;height:29px;background:#808080"></div>
<div class="t" style="left:1154px;top:199px;font-size:11px">Mo.</div>
<div class="t" style="left:1154px;top:212px;font-size:11px">31.</div>
<div class="a" style="left:136px;top:225px;width:1037px;height:1px;background:#808080"></div>
<div class="a" style="left:136px;top:244px;width:1037px;height:1px;background:#808080"></div>
<div class="t b" style="left:142px;top:231.7px;font-size:10.4px;-webkit-text-stroke:0.35px #000">S</div>
<div class="t r" style="left:155px;top:230px;font-size:11px">Mustermann, Max (SL)</div>
<div class="t" style="left:303px;top:230px;width:39px;text-align:right;font-size:11px">0,0</div>
<div class="t" style="left:344px;top:230px;width:66px;text-align:right;font-size:11px">200,0 (-4,5)</div>
<div class="t" style="left:412px;top:230px;width:35px;text-align:right;font-size:11px">-4,5</div>
<div class="t" style="left:450px;top:230px;font-size:11px">0|30</div>
<div class="a" style="left:492px;top:226px;width:22px;height:18px;background:#3a6697"></div>
<div class="a" style="left:491px;top:226px;width:1px;height:18px;background:#808080"></div>
<div class="t" style="left:491px;top:230px;width:22px;text-align:center;font-size:11px;color:#fff">S</div>
<div class="a" style="left:515px;top:226px;width:21px;height:18px;background:#7e93a6"></div>
<div class="a" style="left:514px;top:226px;width:1px;height:18px;background:#808080"></div>
<div class="a" style="left:537px;top:226px;width:21px;height:18px;background:#ffffff"></div>
<div class="a" style="left:536px;top:226px;width:1px;height:18px;background:#808080"></div>
<div class="a" style="left:559px;top:226px;width:21px;height:18px;background:#ffffff"></div>
<div class="a" style="left:558px;top:226px;width:1px;height:18px;background:#808080"></div>
<div class="a" style="left:581px;top:226px;width:21px;height:18px;background:#b7c8d8"></div>
<div class="a" style="left:580px;top:226px;width:1px;height:18px;background:#808080"></div>
<div class="t" style="left:580px;top:230px;width:21px;text-align:center;font-size:11px;color:#fff">F</div>
<div class="a" style="left:603px;top:226px;width:21px;height:18px;background:#b7c8d8"></div>
<div class="a" style="left:602px;top:226px;width:1px;height:18px;background:#808080"></div>
<div class="t" style="left:602px;top:230px;width:21px;text-align:center;font-size:11px;color:#fff">F</div>
<div class="a" style="left:625px;top:226px;width:21px;height:18px;background:#b7c8d8"></div>
<div class="a" style="left:624px;top:226px;width:1px;height:18px;background:#808080"></div>
<div class="t" style="left:624px;top:230px;width:21px;text-align:center;font-size:11px;color:#fff">F</div>
<div class="a" style="left:647px;top:226px;width:21px;height:18px;background:#b7c8d8"></div>
<div class="a" style="left:646px;top:226px;width:1px;height:18px;background:#808080"></div>
<div class="t" style="left:646px;top:230px;width:21px;text-align:center;font-size:11px;color:#fff">F</div>
<div class="a" style="left:669px;top:226px;width:21px;height:18px;background:#372a12"></div>
<div class="a" style="left:668px;top:226px;width:1px;height:18px;background:#808080"></div>
<div class="t" style="left:668px;top:230px;width:21px;text-align:center;font-size:11px;color:#fff">N</div>
<div class="a" style="left:691px;top:226px;width:21px;height:18px;background:#372a12"></div>
<div class="a" style="left:690px;top:226px;width:1px;height:18px;background:#808080"></div>
<div class="t" style="left:690px;top:230px;width:21px;text-align:center;font-size:11px;color:#fff">N</div>
<div class="a" style="left:713px;top:226px;width:21px;height:18px;background:#372a12"></div>
<div class="a" style="left:712px;top:226px;width:1px;height:18px;background:#808080"></div>
<div class="t" style="left:712px;top:230px;width:21px;text-align:center;font-size:11px;color:#fff">N</div>
<div class="a" style="left:735px;top:226px;width:21px;height:18px;background:#ffffff"></div>
<div class="a" style="left:734px;top:226px;width:1px;height:18px;background:#808080"></div>
<div class="a" style="left:757px;top:226px;width:21px;height:18px;background:#ffffff"></div>
<div class="a" style="left:756px;top:226px;width:1px;height:18px;background:#808080"></div>
<div class="a" style="left:779px;top:226px;width:21px;height:18px;background:#ffffff"></div>
<div class="a" style="left:778px;top:226px;width:1px;height:18px;background:#808080"></div>
<div class="a" style="left:801px;top:226px;width:21px;height:18px;background:#7e93a6"></div>
<div class="a" style="left:800px;top:226px;width:1px;height:18px;background:#808080"></div>
<div class="a" style="left:823px;top:226px;width:21px;height:18px;background:#7e93a6"></div>
<div class="a" style="left:822px;top:226px;width:1px;height:18px;background:#808080"></div>
<div class="a" style="left:845px;top:226px;width:21px;height:18px;background:#b7c8d8"></div>
<div class="a" style="left:844px;top:226px;width:1px;height:18px;background:#808080"></div>
<div class="t" style="left:844px;top:230px;width:21px;text-align:center;font-size:11px;color:#fff">F</div>
<div class="a" style="left:867px;top:226px;width:21px;height:18px;background:#b7c8d8"></div>
<div class="a" style="left:866px;top:226px;width:1px;height:18px;background:#808080"></div>
<div class="t" style="left:866px;top:230px;width:21px;text-align:center;font-size:11px;color:#fff">F</div>
<div class="a" style="left:889px;top:226px;width:21px;height:18px;background:#372a12"></div>
<div class="a" style="left:888px;top:226px;width:1px;height:18px;background:#808080"></div>
<div class="t" style="left:888px;top:230px;width:21px;text-align:center;font-size:11px;color:#fff">N</div>
<div class="a" style="left:911px;top:226px;width:21px;height:18px;background:#372a12"></div>
<div class="a" style="left:910px;top:226px;width:1px;height:18px;background:#808080"></div>
<div class="t" style="left:910px;top:230px;width:21px;text-align:center;font-size:11px;color:#fff">N</div>
<div class="a" style="left:933px;top:226px;width:21px;height:18px;background:#372a12"></div>
<div class="a" style="left:932px;top:226px;width:1px;height:18px;background:#808080"></div>
<div class="t" style="left:932px;top:230px;width:21px;text-align:center;font-size:11px;color:#fff">N</div>
<div class="a" style="left:955px;top:226px;width:21px;height:18px;background:#7e93a6"></div>
<div class="a" style="left:954px;top:226px;width:1px;height:18px;background:#808080"></div>
<div class="a" style="left:977px;top:226px;width:21px;height:18px;background:#7e93a6"></div>
<div class="a" style="left:976px;top:226px;width:1px;height:18px;background:#808080"></div>
<div class="a" style="left:999px;top:226px;width:21px;height:18px;background:#3a6697"></div>
<div class="a" style="left:998px;top:226px;width:1px;height:18px;background:#808080"></div>
<div class="t" style="left:998px;top:230px;width:21px;text-align:center;font-size:11px;color:#fff">S</div>
<div class="a" style="left:1021px;top:226px;width:21px;height:18px;background:#3a6697"></div>
<div class="a" style="left:1020px;top:226px;width:1px;height:18px;background:#808080"></div>
<div class="t" style="left:1020px;top:230px;width:21px;text-align:center;font-size:11px;color:#fff">S</div>
<div class="a" style="left:1043px;top:226px;width:21px;height:18px;background:#3a6697"></div>
<div class="a" style="left:1042px;top:226px;width:1px;height:18px;background:#808080"></div>
<div class="t" style="left:1042px;top:230px;width:21px;text-align:center;font-size:11px;color:#fff">S</div>
<div class="a" style="left:1065px;top:226px;width:21px;height:18px;background:#3a6697"></div>
<div class="a" style="left:1064px;top:226px;width:1px;height:18px;background:#808080"></div>
<div class="t" style="left:1064px;top:230px;width:21px;text-align:center;font-size:11px;color:#fff">S</div>
<div class="a" style="left:1087px;top:226px;width:21px;height:18px;background:#3a6697"></div>
<div class="a" style="left:1086px;top:226px;width:1px;height:18px;background:#808080"></div>
<div class="t" style="left:1086px;top:230px;width:21px;text-align:center;font-size:11px;color:#fff">S</div>
<div class="a" style="left:1109px;top:226px;width:21px;height:18px;background:#3a6697"></div>
<div class="a" style="left:1108px;top:226px;width:1px;height:18px;background:#808080"></div>
<div class="t" style="left:1108px;top:230px;width:21px;text-align:center;font-size:11px;color:#fff">S</div>
<div class="a" style="left:1131px;top:226px;width:21px;height:18px;background:#7e93a6"></div>
<div class="a" style="left:1130px;top:226px;width:1px;height:18px;background:#808080"></div>
<div class="a" style="left:1153px;top:226px;width:21px;height:18px;background:#ffffff"></div>
<div class="a" style="left:1152px;top:226px;width:1px;height:18px;background:#808080"></div>
<div class="a" style="left:136px;top:262px;width:1037px;height:1px;background:#808080"></div>
<div class="a" style="left:137px;top:245px;width:16px;height:17px;background:#e3ad62"></div>
<div class="t b" style="left:142px;top:249.7px;font-size:10.4px;-webkit-text-stroke:0.35px #000">S</div>
<div class="t r" style="left:155px;top:248px;font-size:11px">Schiller, Friedrich (SL)</div>
<div class="t" style="left:303px;top:248px;width:39px;text-align:right;font-size:11px">0,0</div>
<div class="t" style="left:344px;top:248px;width:66px;text-align:right;font-size:11px">200,0 (5,3)</div>
<div class="t" style="left:412px;top:248px;width:35px;text-align:right;font-size:11px">5,3</div>
<div class="t" style="left:450px;top:248px;font-size:11px">0|26</div>
<div class="a" style="left:492px;top:245px;width:22px;height:17px;background:#b7c8d8"></div>
<div class="a" style="left:491px;top:245px;width:1px;height:17px;background:#808080"></div>
<div class="t" style="left:491px;top:248px;width:22px;text-align:center;font-size:11px;color:#fff">F</div>
<div class="a" style="left:515px;top:245px;width:21px;height:17px;background:#372a12"></div>
<div class="a" style="left:514px;top:245px;width:1px;height:17px;background:#808080"></div>
<div class="t" style="left:514px;top:248px;width:21px;text-align:center;font-size:11px;color:#fff">N</div>
<div class="a" style="left:537px;top:245px;width:21px;height:17px;background:#372a12"></div>
<div class="a" style="left:536px;top:245px;width:1px;height:17px;background:#808080"></div>
<div class="t" style="left:536px;top:248px;width:21px;text-align:center;font-size:11px;color:#fff">N</div>
<div class="a" style="left:559px;top:245px;width:21px;height:17px;background:#372a12"></div>
<div class="a" style="left:558px;top:245px;width:1px;height:17px;background:#808080"></div>
<div class="t" style="left:558px;top:248px;width:21px;text-align:center;font-size:11px;color:#fff">N</div>
<div class="a" style="left:581px;top:245px;width:21px;height:17px;background:#ffffff"></div>
<div class="a" style="left:580px;top:245px;width:1px;height:17px;background:#808080"></div>
<div class="a" style="left:603px;top:245px;width:21px;height:17px;background:#ffffff"></div>
<div class="a" style="left:602px;top:245px;width:1px;height:17px;background:#808080"></div>
<div class="a" style="left:625px;top:245px;width:21px;height:17px;background:#ffffff"></div>
<div class="a" style="left:624px;top:245px;width:1px;height:17px;background:#808080"></div>
<div class="a" style="left:647px;top:245px;width:21px;height:17px;background:#7e93a6"></div>
<div class="a" style="left:646px;top:245px;width:1px;height:17px;background:#808080"></div>
<div class="a" style="left:669px;top:245px;width:21px;height:17px;background:#7e93a6"></div>
<div class="a" style="left:668px;top:245px;width:1px;height:17px;background:#808080"></div>
<div class="a" style="left:691px;top:245px;width:21px;height:17px;background:#b7c8d8"></div>
<div class="a" style="left:690px;top:245px;width:1px;height:17px;background:#808080"></div>
<div class="t" style="left:690px;top:248px;width:21px;text-align:center;font-size:11px;color:#fff">F</div>
<div class="a" style="left:713px;top:245px;width:21px;height:17px;background:#b7c8d8"></div>
<div class="a" style="left:712px;top:245px;width:1px;height:17px;background:#808080"></div>
<div class="t" style="left:712px;top:248px;width:21px;text-align:center;font-size:11px;color:#fff">F</div>
<div class="a" style="left:735px;top:245px;width:21px;height:17px;background:#372a12"></div>
<div class="a" style="left:734px;top:245px;width:1px;height:17px;background:#808080"></div>
<div class="t" style="left:734px;top:248px;width:21px;text-align:center;font-size:11px;color:#fff">N</div>
<div class="a" style="left:757px;top:245px;width:21px;height:17px;background:#372a12"></div>
<div class="a" style="left:756px;top:245px;width:1px;height:17px;background:#808080"></div>
<div class="t" style="left:756px;top:248px;width:21px;text-align:center;font-size:11px;color:#fff">N</div>
<div class="a" style="left:779px;top:245px;width:21px;height:17px;background:#372a12"></div>
<div class="a" style="left:778px;top:245px;width:1px;height:17px;background:#808080"></div>
<div class="t" style="left:778px;top:248px;width:21px;text-align:center;font-size:11px;color:#fff">N</div>
<div class="a" style="left:801px;top:245px;width:21px;height:17px;background:#7e93a6"></div>
<div class="a" style="left:800px;top:245px;width:1px;height:17px;background:#808080"></div>
<div class="a" style="left:823px;top:245px;width:21px;height:17px;background:#7e93a6"></div>
<div class="a" style="left:822px;top:245px;width:1px;height:17px;background:#808080"></div>
<div class="a" style="left:845px;top:245px;width:21px;height:17px;background:#3a6697"></div>
<div class="a" style="left:844px;top:245px;width:1px;height:17px;background:#808080"></div>
<div class="t" style="left:844px;top:248px;width:21px;text-align:center;font-size:11px;color:#fff">S</div>
<div class="a" style="left:867px;top:245px;width:21px;height:17px;background:#3a6697"></div>
<div class="a" style="left:866px;top:245px;width:1px;height:17px;background:#808080"></div>
<div class="t" style="left:866px;top:248px;width:21px;text-align:center;font-size:11px;color:#fff">S</div>
<div class="a" style="left:889px;top:245px;width:21px;height:17px;background:#3a6697"></div>
<div class="a" style="left:888px;top:245px;width:1px;height:17px;background:#808080"></div>
<div class="t" style="left:888px;top:248px;width:21px;text-align:center;font-size:11px;color:#fff">S</div>
<div class="a" style="left:911px;top:245px;width:21px;height:17px;background:#3a6697"></div>
<div class="a" style="left:910px;top:245px;width:1px;height:17px;background:#808080"></div>
<div class="t" style="left:910px;top:248px;width:21px;text-align:center;font-size:11px;color:#fff">S</div>
<div class="a" style="left:933px;top:245px;width:21px;height:17px;background:#3a6697"></div>
<div class="a" style="left:932px;top:245px;width:1px;height:17px;background:#808080"></div>
<div class="t" style="left:932px;top:248px;width:21px;text-align:center;font-size:11px;color:#fff">S</div>
<div class="a" style="left:955px;top:245px;width:21px;height:17px;background:#3a6697"></div>
<div class="a" style="left:954px;top:245px;width:1px;height:17px;background:#808080"></div>
<div class="t" style="left:954px;top:248px;width:21px;text-align:center;font-size:11px;color:#fff">S</div>
<div class="a" style="left:977px;top:245px;width:21px;height:17px;background:#7e93a6"></div>
<div class="a" style="left:976px;top:245px;width:1px;height:17px;background:#808080"></div>
<div class="a" style="left:999px;top:245px;width:21px;height:17px;background:#ffffff"></div>
<div class="a" style="left:998px;top:245px;width:1px;height:17px;background:#808080"></div>
<div class="a" style="left:1021px;top:245px;width:21px;height:17px;background:#ffffff"></div>
<div class="a" style="left:1020px;top:245px;width:1px;height:17px;background:#808080"></div>
<div class="a" style="left:1043px;top:245px;width:21px;height:17px;background:#b7c8d8"></div>
<div class="a" style="left:1042px;top:245px;width:1px;height:17px;background:#808080"></div>
<div class="t" style="left:1042px;top:248px;width:21px;text-align:center;font-size:11px;color:#fff">F</div>
<div class="a" style="left:1065px;top:245px;width:21px;height:17px;background:#b7c8d8"></div>
<div class="a" style="left:1064px;top:245px;width:1px;height:17px;background:#808080"></div>
<div class="t" style="left:1064px;top:248px;width:21px;text-align:center;font-size:11px;color:#fff">F</div>
<div class="a" style="left:1087px;top:245px;width:21px;height:17px;background:#b7c8d8"></div>
<div class="a" style="left:1086px;top:245px;width:1px;height:17px;background:#808080"></div>
<div class="t" style="left:1086px;top:248px;width:21px;text-align:center;font-size:11px;color:#fff">F</div>
<div class="a" style="left:1109px;top:245px;width:21px;height:17px;background:#b7c8d8"></div>
<div class="a" style="left:1108px;top:245px;width:1px;height:17px;background:#808080"></div>
<div class="t" style="left:1108px;top:248px;width:21px;text-align:center;font-size:11px;color:#fff">F</div>
<div class="a" style="left:1131px;top:245px;width:21px;height:17px;background:#372a12"></div>
<div class="a" style="left:1130px;top:245px;width:1px;height:17px;background:#808080"></div>
<div class="t" style="left:1130px;top:248px;width:21px;text-align:center;font-size:11px;color:#fff">N</div>
<div class="a" style="left:1153px;top:245px;width:21px;height:17px;background:#372a12"></div>
<div class="a" style="left:1152px;top:245px;width:1px;height:17px;background:#808080"></div>
<div class="t" style="left:1152px;top:248px;width:21px;text-align:center;font-size:11px;color:#fff">N</div>
<div class="a" style="left:136px;top:280px;width:1037px;height:1px;background:#808080"></div>
<div class="t b" style="left:142px;top:267.7px;font-size:10.4px;-webkit-text-stroke:0.35px #000">S</div>
<div class="t r" style="left:155px;top:266px;font-size:11px">Goeppert-Mayer, Maria (SL)</div>
<div class="t" style="left:303px;top:266px;width:39px;text-align:right;font-size:11px">24,0</div>
<div class="t" style="left:344px;top:266px;width:66px;text-align:right;font-size:11px">200,0 (13,3)</div>
<div class="t" style="left:412px;top:266px;width:35px;text-align:right;font-size:11px">37,3</div>
<div class="t" style="left:450px;top:266px;font-size:11px">0|32</div>
<div class="a" style="left:492px;top:263px;width:22px;height:17px;background:#7e93a6"></div>
<div class="a" style="left:491px;top:263px;width:1px;height:17px;background:#808080"></div>
<div class="a" style="left:515px;top:263px;width:21px;height:17px;background:#7e93a6"></div>
<div class="a" style="left:514px;top:263px;width:1px;height:17px;background:#808080"></div>
<div class="a" style="left:537px;top:263px;width:21px;height:17px;background:#b7c8d8"></div>
<div class="a" style="left:536px;top:263px;width:1px;height:17px;background:#808080"></div>
<div class="t" style="left:536px;top:266px;width:21px;text-align:center;font-size:11px;color:#fff">F</div>
<div class="a" style="left:559px;top:263px;width:21px;height:17px;background:#b7c8d8"></div>
<div class="a" style="left:558px;top:263px;width:1px;height:17px;background:#808080"></div>
<div class="t" style="left:558px;top:266px;width:21px;text-align:center;font-size:11px;color:#fff">F</div>
<div class="a" style="left:581px;top:263px;width:21px;height:17px;background:#372a12"></div>
<div class="a" style="left:580px;top:263px;width:1px;height:17px;background:#808080"></div>
<div class="t" style="left:580px;top:266px;width:21px;text-align:center;font-size:11px;color:#fff">N</div>
<div class="a" style="left:603px;top:263px;width:21px;height:17px;background:#372a12"></div>
<div class="a" style="left:602px;top:263px;width:1px;height:17px;background:#808080"></div>
<div class="t" style="left:602px;top:266px;width:21px;text-align:center;font-size:11px;color:#fff">N</div>
<div class="a" style="left:625px;top:263px;width:21px;height:17px;background:#372a12"></div>
<div class="a" style="left:624px;top:263px;width:1px;height:17px;background:#808080"></div>
<div class="t" style="left:624px;top:266px;width:21px;text-align:center;font-size:11px;color:#fff">N</div>
<div class="a" style="left:647px;top:263px;width:21px;height:17px;background:#7e93a6"></div>
<div class="a" style="left:646px;top:263px;width:1px;height:17px;background:#808080"></div>
<div class="a" style="left:669px;top:263px;width:21px;height:17px;background:#7e93a6"></div>
<div class="a" style="left:668px;top:263px;width:1px;height:17px;background:#808080"></div>
<div class="a" style="left:691px;top:263px;width:21px;height:17px;background:#3a6697"></div>
<div class="a" style="left:690px;top:263px;width:1px;height:17px;background:#808080"></div>
<div class="t" style="left:690px;top:266px;width:21px;text-align:center;font-size:11px;color:#fff">S</div>
<div class="a" style="left:713px;top:263px;width:21px;height:17px;background:#3a6697"></div>
<div class="a" style="left:712px;top:263px;width:1px;height:17px;background:#808080"></div>
<div class="t" style="left:712px;top:266px;width:21px;text-align:center;font-size:11px;color:#fff">S</div>
<div class="a" style="left:735px;top:263px;width:21px;height:17px;background:#3a6697"></div>
<div class="a" style="left:734px;top:263px;width:1px;height:17px;background:#808080"></div>
<div class="t" style="left:734px;top:266px;width:21px;text-align:center;font-size:11px;color:#fff">S</div>
<div class="a" style="left:757px;top:263px;width:21px;height:17px;background:#3a6697"></div>
<div class="a" style="left:756px;top:263px;width:1px;height:17px;background:#808080"></div>
<div class="t" style="left:756px;top:266px;width:21px;text-align:center;font-size:11px;color:#fff">S</div>
<div class="a" style="left:779px;top:263px;width:21px;height:17px;background:#3a6697"></div>
<div class="a" style="left:778px;top:263px;width:1px;height:17px;background:#808080"></div>
<div class="t" style="left:778px;top:266px;width:21px;text-align:center;font-size:11px;color:#fff">S</div>
<div class="a" style="left:801px;top:263px;width:21px;height:17px;background:#3a6697"></div>
<div class="a" style="left:800px;top:263px;width:1px;height:17px;background:#808080"></div>
<div class="t" style="left:800px;top:266px;width:21px;text-align:center;font-size:11px;color:#fff">S</div>
<div class="a" style="left:823px;top:263px;width:21px;height:17px;background:#7e93a6"></div>
<div class="a" style="left:822px;top:263px;width:1px;height:17px;background:#808080"></div>
<div class="a" style="left:845px;top:263px;width:21px;height:17px;background:#ffffff"></div>
<div class="a" style="left:844px;top:263px;width:1px;height:17px;background:#808080"></div>
<div class="a" style="left:867px;top:263px;width:21px;height:17px;background:#ffffff"></div>
<div class="a" style="left:866px;top:263px;width:1px;height:17px;background:#808080"></div>
<div class="a" style="left:889px;top:263px;width:21px;height:17px;background:#b7c8d8"></div>
<div class="a" style="left:888px;top:263px;width:1px;height:17px;background:#808080"></div>
<div class="t" style="left:888px;top:266px;width:21px;text-align:center;font-size:11px;color:#fff">F</div>
<div class="a" style="left:911px;top:263px;width:21px;height:17px;background:#b7c8d8"></div>
<div class="a" style="left:910px;top:263px;width:1px;height:17px;background:#808080"></div>
<div class="t" style="left:910px;top:266px;width:21px;text-align:center;font-size:11px;color:#fff">F</div>
<div class="a" style="left:933px;top:263px;width:21px;height:17px;background:#b7c8d8"></div>
<div class="a" style="left:932px;top:263px;width:1px;height:17px;background:#808080"></div>
<div class="t" style="left:932px;top:266px;width:21px;text-align:center;font-size:11px;color:#fff">F</div>
<div class="a" style="left:955px;top:263px;width:21px;height:17px;background:#b7c8d8"></div>
<div class="a" style="left:954px;top:263px;width:1px;height:17px;background:#808080"></div>
<div class="t" style="left:954px;top:266px;width:21px;text-align:center;font-size:11px;color:#fff">F</div>
<div class="a" style="left:977px;top:263px;width:21px;height:17px;background:#372a12"></div>
<div class="a" style="left:976px;top:263px;width:1px;height:17px;background:#808080"></div>
<div class="t" style="left:976px;top:266px;width:21px;text-align:center;font-size:11px;color:#fff">N</div>
<div class="a" style="left:999px;top:263px;width:21px;height:17px;background:#372a12"></div>
<div class="a" style="left:998px;top:263px;width:1px;height:17px;background:#808080"></div>
<div class="t" style="left:998px;top:266px;width:21px;text-align:center;font-size:11px;color:#fff">N</div>
<div class="a" style="left:1021px;top:263px;width:21px;height:17px;background:#372a12"></div>
<div class="a" style="left:1020px;top:263px;width:1px;height:17px;background:#808080"></div>
<div class="t" style="left:1020px;top:266px;width:21px;text-align:center;font-size:11px;color:#fff">N</div>
<div class="a" style="left:1043px;top:263px;width:21px;height:17px;background:#ffffff"></div>
<div class="a" style="left:1042px;top:263px;width:1px;height:17px;background:#808080"></div>
<div class="a" style="left:1065px;top:263px;width:21px;height:17px;background:#ffffff"></div>
<div class="a" style="left:1064px;top:263px;width:1px;height:17px;background:#808080"></div>
<div class="a" style="left:1087px;top:263px;width:21px;height:17px;background:#ffffff"></div>
<div class="a" style="left:1086px;top:263px;width:1px;height:17px;background:#808080"></div>
<div class="a" style="left:1109px;top:263px;width:21px;height:17px;background:#7e93a6"></div>
<div class="a" style="left:1108px;top:263px;width:1px;height:17px;background:#808080"></div>
<div class="a" style="left:1131px;top:263px;width:21px;height:17px;background:#7e93a6"></div>
<div class="a" style="left:1130px;top:263px;width:1px;height:17px;background:#808080"></div>
<div class="a" style="left:1153px;top:263px;width:21px;height:17px;background:#b7c8d8"></div>
<div class="a" style="left:1152px;top:263px;width:1px;height:17px;background:#808080"></div>
<div class="t" style="left:1152px;top:266px;width:21px;text-align:center;font-size:11px;color:#fff">F</div>
<div class="a" style="left:136px;top:298px;width:1037px;height:1px;background:#808080"></div>
<div class="t b" style="left:142px;top:285.7px;font-size:10.4px;-webkit-text-stroke:0.35px #000">S</div>
<div class="t r" style="left:155px;top:284px;font-size:11px">Diesel, Rudolf (SL, M)</div>
<div class="t" style="left:303px;top:284px;width:39px;text-align:right;font-size:11px">8,0</div>
<div class="t" style="left:344px;top:284px;width:66px;text-align:right;font-size:11px">200,0 (3,5)</div>
<div class="t" style="left:412px;top:284px;width:35px;text-align:right;font-size:11px">11,5</div>
<div class="t" style="left:450px;top:284px;font-size:11px">0|33</div>
<div class="a" style="left:492px;top:281px;width:22px;height:17px;background:#7e93a6"></div>
<div class="a" style="left:491px;top:281px;width:1px;height:17px;background:#808080"></div>
<div class="a" style="left:515px;top:281px;width:21px;height:17px;background:#7e93a6"></div>
<div class="a" style="left:514px;top:281px;width:1px;height:17px;background:#808080"></div>
<div class="a" style="left:537px;top:281px;width:21px;height:17px;background:#3a6697"></div>
<div class="a" style="left:536px;top:281px;width:1px;height:17px;background:#808080"></div>
<div class="t" style="left:536px;top:284px;width:21px;text-align:center;font-size:11px;color:#fff">S</div>
<div class="a" style="left:559px;top:281px;width:21px;height:17px;background:#3a6697"></div>
<div class="a" style="left:558px;top:281px;width:1px;height:17px;background:#808080"></div>
<div class="t" style="left:558px;top:284px;width:21px;text-align:center;font-size:11px;color:#fff">S</div>
<div class="a" style="left:581px;top:281px;width:21px;height:17px;background:#3a6697"></div>
<div class="a" style="left:580px;top:281px;width:1px;height:17px;background:#808080"></div>
<div class="t" style="left:580px;top:284px;width:21px;text-align:center;font-size:11px;color:#fff">S</div>
<div class="a" style="left:603px;top:281px;width:21px;height:17px;background:#3a6697"></div>
<div class="a" style="left:602px;top:281px;width:1px;height:17px;background:#808080"></div>
<div class="t" style="left:602px;top:284px;width:21px;text-align:center;font-size:11px;color:#fff">S</div>
<div class="a" style="left:625px;top:281px;width:21px;height:17px;background:#3a6697"></div>
<div class="a" style="left:624px;top:281px;width:1px;height:17px;background:#808080"></div>
<div class="t" style="left:624px;top:284px;width:21px;text-align:center;font-size:11px;color:#fff">S</div>
<div class="a" style="left:647px;top:281px;width:21px;height:17px;background:#3a6697"></div>
<div class="a" style="left:646px;top:281px;width:1px;height:17px;background:#808080"></div>
<div class="t" style="left:646px;top:284px;width:21px;text-align:center;font-size:11px;color:#fff">S</div>
<div class="a" style="left:669px;top:281px;width:21px;height:17px;background:#7e93a6"></div>
<div class="a" style="left:668px;top:281px;width:1px;height:17px;background:#808080"></div>
<div class="a" style="left:691px;top:281px;width:21px;height:17px;background:#ffffff"></div>
<div class="a" style="left:690px;top:281px;width:1px;height:17px;background:#808080"></div>
<div class="a" style="left:713px;top:281px;width:21px;height:17px;background:#ffffff"></div>
<div class="a" style="left:712px;top:281px;width:1px;height:17px;background:#808080"></div>
<div class="a" style="left:735px;top:281px;width:21px;height:17px;background:#b7c8d8"></div>
<div class="a" style="left:734px;top:281px;width:1px;height:17px;background:#808080"></div>
<div class="t" style="left:734px;top:284px;width:21px;text-align:center;font-size:11px;color:#fff">F</div>
<div class="a" style="left:757px;top:281px;width:21px;height:17px;background:#b7c8d8"></div>
<div class="a" style="left:756px;top:281px;width:1px;height:17px;background:#808080"></div>
<div class="t" style="left:756px;top:284px;width:21px;text-align:center;font-size:11px;color:#fff">F</div>
<div class="a" style="left:779px;top:281px;width:21px;height:17px;background:#b7c8d8"></div>
<div class="a" style="left:778px;top:281px;width:1px;height:17px;background:#808080"></div>
<div class="t" style="left:778px;top:284px;width:21px;text-align:center;font-size:11px;color:#fff">F</div>
<div class="a" style="left:801px;top:281px;width:21px;height:17px;background:#b7c8d8"></div>
<div class="a" style="left:800px;top:281px;width:1px;height:17px;background:#808080"></div>
<div class="t" style="left:800px;top:284px;width:21px;text-align:center;font-size:11px;color:#fff">F</div>
<div class="a" style="left:823px;top:281px;width:21px;height:17px;background:#372a12"></div>
<div class="a" style="left:822px;top:281px;width:1px;height:17px;background:#808080"></div>
<div class="t" style="left:822px;top:284px;width:21px;text-align:center;font-size:11px;color:#fff">N</div>
<div class="a" style="left:845px;top:281px;width:21px;height:17px;background:#372a12"></div>
<div class="a" style="left:844px;top:281px;width:1px;height:17px;background:#808080"></div>
<div class="t" style="left:844px;top:284px;width:21px;text-align:center;font-size:11px;color:#fff">N</div>
<div class="a" style="left:867px;top:281px;width:21px;height:17px;background:#372a12"></div>
<div class="a" style="left:866px;top:281px;width:1px;height:17px;background:#808080"></div>
<div class="t" style="left:866px;top:284px;width:21px;text-align:center;font-size:11px;color:#fff">N</div>
<div class="a" style="left:889px;top:281px;width:21px;height:17px;background:#ffffff"></div>
<div class="a" style="left:888px;top:281px;width:1px;height:17px;background:#808080"></div>
<div class="a" style="left:911px;top:281px;width:21px;height:17px;background:#ffffff"></div>
<div class="a" style="left:910px;top:281px;width:1px;height:17px;background:#808080"></div>
<div class="a" style="left:933px;top:281px;width:21px;height:17px;background:#ffffff"></div>
<div class="a" style="left:932px;top:281px;width:1px;height:17px;background:#808080"></div>
<div class="a" style="left:955px;top:281px;width:21px;height:17px;background:#7e93a6"></div>
<div class="a" style="left:954px;top:281px;width:1px;height:17px;background:#808080"></div>
<div class="a" style="left:977px;top:281px;width:21px;height:17px;background:#7e93a6"></div>
<div class="a" style="left:976px;top:281px;width:1px;height:17px;background:#808080"></div>
<div class="a" style="left:999px;top:281px;width:21px;height:17px;background:#b7c8d8"></div>
<div class="a" style="left:998px;top:281px;width:1px;height:17px;background:#808080"></div>
<div class="t" style="left:998px;top:284px;width:21px;text-align:center;font-size:11px;color:#fff">F</div>
<div class="a" style="left:1021px;top:281px;width:21px;height:17px;background:#b7c8d8"></div>
<div class="a" style="left:1020px;top:281px;width:1px;height:17px;background:#808080"></div>
<div class="t" style="left:1020px;top:284px;width:21px;text-align:center;font-size:11px;color:#fff">F</div>
<div class="a" style="left:1043px;top:281px;width:21px;height:17px;background:#372a12"></div>
<div class="a" style="left:1042px;top:281px;width:1px;height:17px;background:#808080"></div>
<div class="t" style="left:1042px;top:284px;width:21px;text-align:center;font-size:11px;color:#fff">N</div>
<div class="a" style="left:1065px;top:281px;width:21px;height:17px;background:#372a12"></div>
<div class="a" style="left:1064px;top:281px;width:1px;height:17px;background:#808080"></div>
<div class="t" style="left:1064px;top:284px;width:21px;text-align:center;font-size:11px;color:#fff">N</div>
<div class="a" style="left:1087px;top:281px;width:21px;height:17px;background:#372a12"></div>
<div class="a" style="left:1086px;top:281px;width:1px;height:17px;background:#808080"></div>
<div class="t" style="left:1086px;top:284px;width:21px;text-align:center;font-size:11px;color:#fff">N</div>
<div class="a" style="left:1109px;top:281px;width:21px;height:17px;background:#7e93a6"></div>
<div class="a" style="left:1108px;top:281px;width:1px;height:17px;background:#808080"></div>
<div class="a" style="left:1131px;top:281px;width:21px;height:17px;background:#7e93a6"></div>
<div class="a" style="left:1130px;top:281px;width:1px;height:17px;background:#808080"></div>
<div class="a" style="left:1153px;top:281px;width:21px;height:17px;background:#3a6697"></div>
<div class="a" style="left:1152px;top:281px;width:1px;height:17px;background:#808080"></div>
<div class="t" style="left:1152px;top:284px;width:21px;text-align:center;font-size:11px;color:#fff">S</div>
<div class="a" style="left:136px;top:316px;width:1037px;height:1px;background:#808080"></div>
<div class="t b" style="left:142px;top:303.7px;font-size:10.4px;-webkit-text-stroke:0.35px #000">S</div>
<div class="t r" style="left:155px;top:302px;font-size:11px">Abel, Miriam (M, SL)</div>
<div class="t" style="left:303px;top:302px;width:39px;text-align:right;font-size:11px">0,0</div>
<div class="t" style="left:344px;top:302px;width:66px;text-align:right;font-size:11px">200,0 (-4,5)</div>
<div class="t" style="left:412px;top:302px;width:35px;text-align:right;font-size:11px">-4,5</div>
<div class="t" style="left:450px;top:302px;font-size:11px">0|24</div>
<div class="a" style="left:492px;top:299px;width:22px;height:17px;background:#3a6697"></div>
<div class="a" style="left:491px;top:299px;width:1px;height:17px;background:#808080"></div>
<div class="t" style="left:491px;top:302px;width:22px;text-align:center;font-size:11px;color:#fff">S</div>
<div class="a" style="left:515px;top:299px;width:21px;height:17px;background:#7e93a6"></div>
<div class="a" style="left:514px;top:299px;width:1px;height:17px;background:#808080"></div>
<div class="a" style="left:537px;top:299px;width:21px;height:17px;background:#ffffff"></div>
<div class="a" style="left:536px;top:299px;width:1px;height:17px;background:#808080"></div>
<div class="a" style="left:559px;top:299px;width:21px;height:17px;background:#ffffff"></div>
<div class="a" style="left:558px;top:299px;width:1px;height:17px;background:#808080"></div>
<div class="a" style="left:581px;top:299px;width:21px;height:17px;background:#b7c8d8"></div>
<div class="a" style="left:580px;top:299px;width:1px;height:17px;background:#808080"></div>
<div class="t" style="left:580px;top:302px;width:21px;text-align:center;font-size:11px;color:#fff">F</div>
<div class="a" style="left:603px;top:299px;width:21px;height:17px;background:#b7c8d8"></div>
<div class="a" style="left:602px;top:299px;width:1px;height:17px;background:#808080"></div>
<div class="t" style="left:602px;top:302px;width:21px;text-align:center;font-size:11px;color:#fff">F</div>
<div class="a" style="left:625px;top:299px;width:21px;height:17px;background:#b7c8d8"></div>
<div class="a" style="left:624px;top:299px;width:1px;height:17px;background:#808080"></div>
<div class="t" style="left:624px;top:302px;width:21px;text-align:center;font-size:11px;color:#fff">F</div>
<div class="a" style="left:647px;top:299px;width:21px;height:17px;background:#b7c8d8"></div>
<div class="a" style="left:646px;top:299px;width:1px;height:17px;background:#808080"></div>
<div class="t" style="left:646px;top:302px;width:21px;text-align:center;font-size:11px;color:#fff">F</div>
<div class="a" style="left:669px;top:299px;width:21px;height:17px;background:#372a12"></div>
<div class="a" style="left:668px;top:299px;width:1px;height:17px;background:#808080"></div>
<div class="t" style="left:668px;top:302px;width:21px;text-align:center;font-size:11px;color:#fff">N</div>
<div class="a" style="left:691px;top:299px;width:21px;height:17px;background:#372a12"></div>
<div class="a" style="left:690px;top:299px;width:1px;height:17px;background:#808080"></div>
<div class="t" style="left:690px;top:302px;width:21px;text-align:center;font-size:11px;color:#fff">N</div>
<div class="a" style="left:713px;top:299px;width:21px;height:17px;background:#372a12"></div>
<div class="a" style="left:712px;top:299px;width:1px;height:17px;background:#808080"></div>
<div class="t" style="left:712px;top:302px;width:21px;text-align:center;font-size:11px;color:#fff">N</div>
<div class="a" style="left:735px;top:299px;width:21px;height:17px;background:#ffffff"></div>
<div class="a" style="left:734px;top:299px;width:1px;height:17px;background:#808080"></div>
<div class="a" style="left:757px;top:299px;width:21px;height:17px;background:#ffffff"></div>
<div class="a" style="left:756px;top:299px;width:1px;height:17px;background:#808080"></div>
<div class="a" style="left:779px;top:299px;width:21px;height:17px;background:#ffffff"></div>
<div class="a" style="left:778px;top:299px;width:1px;height:17px;background:#808080"></div>
<div class="a" style="left:801px;top:299px;width:21px;height:17px;background:#7e93a6"></div>
<div class="a" style="left:800px;top:299px;width:1px;height:17px;background:#808080"></div>
<div class="a" style="left:823px;top:299px;width:21px;height:17px;background:#7e93a6"></div>
<div class="a" style="left:822px;top:299px;width:1px;height:17px;background:#808080"></div>
<div class="a" style="left:845px;top:299px;width:21px;height:17px;background:#b7c8d8"></div>
<div class="a" style="left:844px;top:299px;width:1px;height:17px;background:#808080"></div>
<div class="t" style="left:844px;top:302px;width:21px;text-align:center;font-size:11px;color:#fff">F</div>
<div class="a" style="left:867px;top:299px;width:21px;height:17px;background:#b7c8d8"></div>
<div class="a" style="left:866px;top:299px;width:1px;height:17px;background:#808080"></div>
<div class="t" style="left:866px;top:302px;width:21px;text-align:center;font-size:11px;color:#fff">F</div>
<div class="a" style="left:889px;top:299px;width:21px;height:17px;background:#372a12"></div>
<div class="a" style="left:888px;top:299px;width:1px;height:17px;background:#808080"></div>
<div class="t" style="left:888px;top:302px;width:21px;text-align:center;font-size:11px;color:#fff">N</div>
<div class="a" style="left:911px;top:299px;width:21px;height:17px;background:#372a12"></div>
<div class="a" style="left:910px;top:299px;width:1px;height:17px;background:#808080"></div>
<div class="t" style="left:910px;top:302px;width:21px;text-align:center;font-size:11px;color:#fff">N</div>
<div class="a" style="left:933px;top:299px;width:21px;height:17px;background:#372a12"></div>
<div class="a" style="left:932px;top:299px;width:1px;height:17px;background:#808080"></div>
<div class="t" style="left:932px;top:302px;width:21px;text-align:center;font-size:11px;color:#fff">N</div>
<div class="a" style="left:955px;top:299px;width:21px;height:17px;background:#7e93a6"></div>
<div class="a" style="left:954px;top:299px;width:1px;height:17px;background:#808080"></div>
<div class="a" style="left:977px;top:299px;width:21px;height:17px;background:#7e93a6"></div>
<div class="a" style="left:976px;top:299px;width:1px;height:17px;background:#808080"></div>
<div class="a" style="left:999px;top:299px;width:21px;height:17px;background:#3a6697"></div>
<div class="a" style="left:998px;top:299px;width:1px;height:17px;background:#808080"></div>
<div class="t" style="left:998px;top:302px;width:21px;text-align:center;font-size:11px;color:#fff">S</div>
<div class="a" style="left:1021px;top:299px;width:21px;height:17px;background:#3a6697"></div>
<div class="a" style="left:1020px;top:299px;width:1px;height:17px;background:#808080"></div>
<div class="t" style="left:1020px;top:302px;width:21px;text-align:center;font-size:11px;color:#fff">S</div>
<div class="a" style="left:1043px;top:299px;width:21px;height:17px;background:#3a6697"></div>
<div class="a" style="left:1042px;top:299px;width:1px;height:17px;background:#808080"></div>
<div class="t" style="left:1042px;top:302px;width:21px;text-align:center;font-size:11px;color:#fff">S</div>
<div class="a" style="left:1065px;top:299px;width:21px;height:17px;background:#3a6697"></div>
<div class="a" style="left:1064px;top:299px;width:1px;height:17px;background:#808080"></div>
<div class="t" style="left:1064px;top:302px;width:21px;text-align:center;font-size:11px;color:#fff">S</div>
<div class="a" style="left:1087px;top:299px;width:21px;height:17px;background:#3a6697"></div>
<div class="a" style="left:1086px;top:299px;width:1px;height:17px;background:#808080"></div>
<div class="t" style="left:1086px;top:302px;width:21px;text-align:center;font-size:11px;color:#fff">S</div>
<div class="a" style="left:1109px;top:299px;width:21px;height:17px;background:#3a6697"></div>
<div class="a" style="left:1108px;top:299px;width:1px;height:17px;background:#808080"></div>
<div class="t" style="left:1108px;top:302px;width:21px;text-align:center;font-size:11px;color:#fff">S</div>
<div class="a" style="left:1131px;top:299px;width:21px;height:17px;background:#7e93a6"></div>
<div class="a" style="left:1130px;top:299px;width:1px;height:17px;background:#808080"></div>
<div class="a" style="left:1153px;top:299px;width:21px;height:17px;background:#ffffff"></div>
<div class="a" style="left:1152px;top:299px;width:1px;height:17px;background:#808080"></div>
<div class="a" style="left:136px;top:334px;width:1037px;height:1px;background:#808080"></div>
<div class="t b" style="left:142px;top:321.7px;font-size:10.4px;-webkit-text-stroke:0.35px #000">S</div>
<div class="t r" style="left:155px;top:320px;font-size:11px">Freud, Sigmund (M)</div>
<div class="t" style="left:303px;top:320px;width:39px;text-align:right;font-size:11px">0,0</div>
<div class="t" style="left:344px;top:320px;width:66px;text-align:right;font-size:11px">200,0 (5,3)</div>
<div class="t" style="left:412px;top:320px;width:35px;text-align:right;font-size:11px">5,3</div>
<div class="t" style="left:450px;top:320px;font-size:11px">0|25</div>
<div class="a" style="left:492px;top:317px;width:22px;height:17px;background:#b7c8d8"></div>
<div class="a" style="left:491px;top:317px;width:1px;height:17px;background:#808080"></div>
<div class="t" style="left:491px;top:320px;width:22px;text-align:center;font-size:11px;color:#fff">F</div>
<div class="a" style="left:515px;top:317px;width:21px;height:17px;background:#372a12"></div>
<div class="a" style="left:514px;top:317px;width:1px;height:17px;background:#808080"></div>
<div class="t" style="left:514px;top:320px;width:21px;text-align:center;font-size:11px;color:#fff">N</div>
<div class="a" style="left:537px;top:317px;width:21px;height:17px;background:#372a12"></div>
<div class="a" style="left:536px;top:317px;width:1px;height:17px;background:#808080"></div>
<div class="t" style="left:536px;top:320px;width:21px;text-align:center;font-size:11px;color:#fff">N</div>
<div class="a" style="left:559px;top:317px;width:21px;height:17px;background:#372a12"></div>
<div class="a" style="left:558px;top:317px;width:1px;height:17px;background:#808080"></div>
<div class="t" style="left:558px;top:320px;width:21px;text-align:center;font-size:11px;color:#fff">N</div>
<div class="a" style="left:581px;top:317px;width:21px;height:17px;background:#ffffff"></div>
<div class="a" style="left:580px;top:317px;width:1px;height:17px;background:#808080"></div>
<div class="a" style="left:603px;top:317px;width:21px;height:17px;background:#ffffff"></div>
<div class="a" style="left:602px;top:317px;width:1px;height:17px;background:#808080"></div>
<div class="a" style="left:625px;top:317px;width:21px;height:17px;background:#ffffff"></div>
<div class="a" style="left:624px;top:317px;width:1px;height:17px;background:#808080"></div>
<div class="a" style="left:647px;top:317px;width:21px;height:17px;background:#7e93a6"></div>
<div class="a" style="left:646px;top:317px;width:1px;height:17px;background:#808080"></div>
<div class="a" style="left:669px;top:317px;width:21px;height:17px;background:#7e93a6"></div>
<div class="a" style="left:668px;top:317px;width:1px;height:17px;background:#808080"></div>
<div class="a" style="left:691px;top:317px;width:21px;height:17px;background:#b7c8d8"></div>
<div class="a" style="left:690px;top:317px;width:1px;height:17px;background:#808080"></div>
<div class="t" style="left:690px;top:320px;width:21px;text-align:center;font-size:11px;color:#fff">F</div>
<div class="a" style="left:713px;top:317px;width:21px;height:17px;background:#b7c8d8"></div>
<div class="a" style="left:712px;top:317px;width:1px;height:17px;background:#808080"></div>
<div class="t" style="left:712px;top:320px;width:21px;text-align:center;font-size:11px;color:#fff">F</div>
<div class="a" style="left:735px;top:317px;width:21px;height:17px;background:#372a12"></div>
<div class="a" style="left:734px;top:317px;width:1px;height:17px;background:#808080"></div>
<div class="t" style="left:734px;top:320px;width:21px;text-align:center;font-size:11px;color:#fff">N</div>
<div class="a" style="left:757px;top:317px;width:21px;height:17px;background:#372a12"></div>
<div class="a" style="left:756px;top:317px;width:1px;height:17px;background:#808080"></div>
<div class="t" style="left:756px;top:320px;width:21px;text-align:center;font-size:11px;color:#fff">N</div>
<div class="a" style="left:779px;top:317px;width:21px;height:17px;background:#372a12"></div>
<div class="a" style="left:778px;top:317px;width:1px;height:17px;background:#808080"></div>
<div class="t" style="left:778px;top:320px;width:21px;text-align:center;font-size:11px;color:#fff">N</div>
<div class="a" style="left:801px;top:317px;width:21px;height:17px;background:#7e93a6"></div>
<div class="a" style="left:800px;top:317px;width:1px;height:17px;background:#808080"></div>
<div class="a" style="left:823px;top:317px;width:21px;height:17px;background:#7e93a6"></div>
<div class="a" style="left:822px;top:317px;width:1px;height:17px;background:#808080"></div>
<div class="a" style="left:845px;top:317px;width:21px;height:17px;background:#3a6697"></div>
<div class="a" style="left:844px;top:317px;width:1px;height:17px;background:#808080"></div>
<div class="t" style="left:844px;top:320px;width:21px;text-align:center;font-size:11px;color:#fff">S</div>
<div class="a" style="left:867px;top:317px;width:21px;height:17px;background:#3a6697"></div>
<div class="a" style="left:866px;top:317px;width:1px;height:17px;background:#808080"></div>
<div class="t" style="left:866px;top:320px;width:21px;text-align:center;font-size:11px;color:#fff">S</div>
<div class="a" style="left:889px;top:317px;width:21px;height:17px;background:#3a6697"></div>
<div class="a" style="left:888px;top:317px;width:1px;height:17px;background:#808080"></div>
<div class="t" style="left:888px;top:320px;width:21px;text-align:center;font-size:11px;color:#fff">S</div>
<div class="a" style="left:911px;top:317px;width:21px;height:17px;background:#3a6697"></div>
<div class="a" style="left:910px;top:317px;width:1px;height:17px;background:#808080"></div>
<div class="t" style="left:910px;top:320px;width:21px;text-align:center;font-size:11px;color:#fff">S</div>
<div class="a" style="left:933px;top:317px;width:21px;height:17px;background:#3a6697"></div>
<div class="a" style="left:932px;top:317px;width:1px;height:17px;background:#808080"></div>
<div class="t" style="left:932px;top:320px;width:21px;text-align:center;font-size:11px;color:#fff">S</div>
<div class="a" style="left:955px;top:317px;width:21px;height:17px;background:#3a6697"></div>
<div class="a" style="left:954px;top:317px;width:1px;height:17px;background:#808080"></div>
<div class="t" style="left:954px;top:320px;width:21px;text-align:center;font-size:11px;color:#fff">S</div>
<div class="a" style="left:977px;top:317px;width:21px;height:17px;background:#7e93a6"></div>
<div class="a" style="left:976px;top:317px;width:1px;height:17px;background:#808080"></div>
<div class="a" style="left:999px;top:317px;width:21px;height:17px;background:#ffffff"></div>
<div class="a" style="left:998px;top:317px;width:1px;height:17px;background:#808080"></div>
<div class="a" style="left:1021px;top:317px;width:21px;height:17px;background:#ffffff"></div>
<div class="a" style="left:1020px;top:317px;width:1px;height:17px;background:#808080"></div>
<div class="a" style="left:1043px;top:317px;width:21px;height:17px;background:#b7c8d8"></div>
<div class="a" style="left:1042px;top:317px;width:1px;height:17px;background:#808080"></div>
<div class="t" style="left:1042px;top:320px;width:21px;text-align:center;font-size:11px;color:#fff">F</div>
<div class="a" style="left:1065px;top:317px;width:21px;height:17px;background:#b7c8d8"></div>
<div class="a" style="left:1064px;top:317px;width:1px;height:17px;background:#808080"></div>
<div class="t" style="left:1064px;top:320px;width:21px;text-align:center;font-size:11px;color:#fff">F</div>
<div class="a" style="left:1087px;top:317px;width:21px;height:17px;background:#b7c8d8"></div>
<div class="a" style="left:1086px;top:317px;width:1px;height:17px;background:#808080"></div>
<div class="t" style="left:1086px;top:320px;width:21px;text-align:center;font-size:11px;color:#fff">F</div>
<div class="a" style="left:1109px;top:317px;width:21px;height:17px;background:#b7c8d8"></div>
<div class="a" style="left:1108px;top:317px;width:1px;height:17px;background:#808080"></div>
<div class="t" style="left:1108px;top:320px;width:21px;text-align:center;font-size:11px;color:#fff">F</div>
<div class="a" style="left:1131px;top:317px;width:21px;height:17px;background:#372a12"></div>
<div class="a" style="left:1130px;top:317px;width:1px;height:17px;background:#808080"></div>
<div class="t" style="left:1130px;top:320px;width:21px;text-align:center;font-size:11px;color:#fff">N</div>
<div class="a" style="left:1153px;top:317px;width:21px;height:17px;background:#372a12"></div>
<div class="a" style="left:1152px;top:317px;width:1px;height:17px;background:#808080"></div>
<div class="t" style="left:1152px;top:320px;width:21px;text-align:center;font-size:11px;color:#fff">N</div>
<div class="a" style="left:136px;top:352px;width:1037px;height:1px;background:#808080"></div>
<div class="t b" style="left:142px;top:339.7px;font-size:10.4px;-webkit-text-stroke:0.35px #000">S</div>
<div class="t r" style="left:155px;top:338px;font-size:11px">Hahn, Otto (M, F)</div>
<div class="t" style="left:303px;top:338px;width:39px;text-align:right;font-size:11px">-5,0</div>
<div class="t" style="left:344px;top:338px;width:66px;text-align:right;font-size:11px">200,0 (13,3)</div>
<div class="t" style="left:412px;top:338px;width:35px;text-align:right;font-size:11px">8,3</div>
<div class="t" style="left:450px;top:338px;font-size:11px">0|27</div>
<div class="a" style="left:492px;top:335px;width:22px;height:17px;background:#7e93a6"></div>
<div class="a" style="left:491px;top:335px;width:1px;height:17px;background:#808080"></div>
<div class="a" style="left:515px;top:335px;width:21px;height:17px;background:#7e93a6"></div>
<div class="a" style="left:514px;top:335px;width:1px;height:17px;background:#808080"></div>
<div class="a" style="left:537px;top:335px;width:21px;height:17px;background:#b7c8d8"></div>
<div class="a" style="left:536px;top:335px;width:1px;height:17px;background:#808080"></div>
<div class="t" style="left:536px;top:338px;width:21px;text-align:center;font-size:11px;color:#fff">F</div>
<div class="a" style="left:559px;top:335px;width:21px;height:17px;background:#b7c8d8"></div>
<div class="a" style="left:558px;top:335px;width:1px;height:17px;background:#808080"></div>
<div class="t" style="left:558px;top:338px;width:21px;text-align:center;font-size:11px;color:#fff">F</div>
<div class="a" style="left:581px;top:335px;width:21px;height:17px;background:#372a12"></div>
<div class="a" style="left:580px;top:335px;width:1px;height:17px;background:#808080"></div>
<div class="t" style="left:580px;top:338px;width:21px;text-align:center;font-size:11px;color:#fff">N</div>
<div class="a" style="left:603px;top:335px;width:21px;height:17px;background:#372a12"></div>
<div class="a" style="left:602px;top:335px;width:1px;height:17px;background:#808080"></div>
<div class="t" style="left:602px;top:338px;width:21px;text-align:center;font-size:11px;color:#fff">N</div>
<div class="a" style="left:625px;top:335px;width:21px;height:17px;background:#372a12"></div>
<div class="a" style="left:624px;top:335px;width:1px;height:17px;background:#808080"></div>
<div class="t" style="left:624px;top:338px;width:21px;text-align:center;font-size:11px;color:#fff">N</div>
<div class="a" style="left:647px;top:335px;width:21px;height:17px;background:#7e93a6"></div>
<div class="a" style="left:646px;top:335px;width:1px;height:17px;background:#808080"></div>
<div class="a" style="left:669px;top:335px;width:21px;height:17px;background:#7e93a6"></div>
<div class="a" style="left:668px;top:335px;width:1px;height:17px;background:#808080"></div>
<div class="a" style="left:691px;top:335px;width:21px;height:17px;background:#3a6697"></div>
<div class="a" style="left:690px;top:335px;width:1px;height:17px;background:#808080"></div>
<div class="t" style="left:690px;top:338px;width:21px;text-align:center;font-size:11px;color:#fff">S</div>
<div class="a" style="left:713px;top:335px;width:21px;height:17px;background:#3a6697"></div>
<div class="a" style="left:712px;top:335px;width:1px;height:17px;background:#808080"></div>
<div class="t" style="left:712px;top:338px;width:21px;text-align:center;font-size:11px;color:#fff">S</div>
<div class="a" style="left:735px;top:335px;width:21px;height:17px;background:#3a6697"></div>
<div class="a" style="left:734px;top:335px;width:1px;height:17px;background:#808080"></div>
<div class="t" style="left:734px;top:338px;width:21px;text-align:center;font-size:11px;color:#fff">S</div>
<div class="a" style="left:757px;top:335px;width:21px;height:17px;background:#3a6697"></div>
<div class="a" style="left:756px;top:335px;width:1px;height:17px;background:#808080"></div>
<div class="t" style="left:756px;top:338px;width:21px;text-align:center;font-size:11px;color:#fff">S</div>
<div class="a" style="left:779px;top:335px;width:21px;height:17px;background:#3a6697"></div>
<div class="a" style="left:778px;top:335px;width:1px;height:17px;background:#808080"></div>
<div class="t" style="left:778px;top:338px;width:21px;text-align:center;font-size:11px;color:#fff">S</div>
<div class="a" style="left:801px;top:335px;width:21px;height:17px;background:#3a6697"></div>
<div class="a" style="left:800px;top:335px;width:1px;height:17px;background:#808080"></div>
<div class="t" style="left:800px;top:338px;width:21px;text-align:center;font-size:11px;color:#fff">S</div>
<div class="a" style="left:823px;top:335px;width:21px;height:17px;background:#7e93a6"></div>
<div class="a" style="left:822px;top:335px;width:1px;height:17px;background:#808080"></div>
<div class="a" style="left:845px;top:335px;width:21px;height:17px;background:#ffffff"></div>
<div class="a" style="left:844px;top:335px;width:1px;height:17px;background:#808080"></div>
<div class="a" style="left:867px;top:335px;width:21px;height:17px;background:#ffffff"></div>
<div class="a" style="left:866px;top:335px;width:1px;height:17px;background:#808080"></div>
<div class="a" style="left:889px;top:335px;width:21px;height:17px;background:#b7c8d8"></div>
<div class="a" style="left:888px;top:335px;width:1px;height:17px;background:#808080"></div>
<div class="t" style="left:888px;top:338px;width:21px;text-align:center;font-size:11px;color:#fff">F</div>
<div class="a" style="left:911px;top:335px;width:21px;height:17px;background:#b7c8d8"></div>
<div class="a" style="left:910px;top:335px;width:1px;height:17px;background:#808080"></div>
<div class="t" style="left:910px;top:338px;width:21px;text-align:center;font-size:11px;color:#fff">F</div>
<div class="a" style="left:933px;top:335px;width:21px;height:17px;background:#b7c8d8"></div>
<div class="a" style="left:932px;top:335px;width:1px;height:17px;background:#808080"></div>
<div class="t" style="left:932px;top:338px;width:21px;text-align:center;font-size:11px;color:#fff">F</div>
<div class="a" style="left:955px;top:335px;width:21px;height:17px;background:#b7c8d8"></div>
<div class="a" style="left:954px;top:335px;width:1px;height:17px;background:#808080"></div>
<div class="t" style="left:954px;top:338px;width:21px;text-align:center;font-size:11px;color:#fff">F</div>
<div class="a" style="left:977px;top:335px;width:21px;height:17px;background:#372a12"></div>
<div class="a" style="left:976px;top:335px;width:1px;height:17px;background:#808080"></div>
<div class="t" style="left:976px;top:338px;width:21px;text-align:center;font-size:11px;color:#fff">N</div>
<div class="a" style="left:999px;top:335px;width:21px;height:17px;background:#372a12"></div>
<div class="a" style="left:998px;top:335px;width:1px;height:17px;background:#808080"></div>
<div class="t" style="left:998px;top:338px;width:21px;text-align:center;font-size:11px;color:#fff">N</div>
<div class="a" style="left:1021px;top:335px;width:21px;height:17px;background:#372a12"></div>
<div class="a" style="left:1020px;top:335px;width:1px;height:17px;background:#808080"></div>
<div class="t" style="left:1020px;top:338px;width:21px;text-align:center;font-size:11px;color:#fff">N</div>
<div class="a" style="left:1043px;top:335px;width:21px;height:17px;background:#ffffff"></div>
<div class="a" style="left:1042px;top:335px;width:1px;height:17px;background:#808080"></div>
<div class="a" style="left:1065px;top:335px;width:21px;height:17px;background:#ffffff"></div>
<div class="a" style="left:1064px;top:335px;width:1px;height:17px;background:#808080"></div>
<div class="a" style="left:1087px;top:335px;width:21px;height:17px;background:#ffffff"></div>
<div class="a" style="left:1086px;top:335px;width:1px;height:17px;background:#808080"></div>
<div class="a" style="left:1109px;top:335px;width:21px;height:17px;background:#7e93a6"></div>
<div class="a" style="left:1108px;top:335px;width:1px;height:17px;background:#808080"></div>
<div class="a" style="left:1131px;top:335px;width:21px;height:17px;background:#7e93a6"></div>
<div class="a" style="left:1130px;top:335px;width:1px;height:17px;background:#808080"></div>
<div class="a" style="left:1153px;top:335px;width:21px;height:17px;background:#b7c8d8"></div>
<div class="a" style="left:1152px;top:335px;width:1px;height:17px;background:#808080"></div>
<div class="t" style="left:1152px;top:338px;width:21px;text-align:center;font-size:11px;color:#fff">F</div>
<div class="a" style="left:136px;top:370px;width:1037px;height:1px;background:#808080"></div>
<div class="t b" style="left:142px;top:357.7px;font-size:10.4px;-webkit-text-stroke:0.35px #000">S</div>
<div class="t r" style="left:155px;top:356px;font-size:11px">Koch, Robert (M, H)</div>
<div class="t" style="left:303px;top:356px;width:39px;text-align:right;font-size:11px">0,0</div>
<div class="t" style="left:344px;top:356px;width:66px;text-align:right;font-size:11px">200,0 (3,5)</div>
<div class="t" style="left:412px;top:356px;width:35px;text-align:right;font-size:11px">3,5</div>
<div class="t" style="left:450px;top:356px;font-size:11px">0|24</div>
<div class="a" style="left:492px;top:353px;width:22px;height:17px;background:#7e93a6"></div>
<div class="a" style="left:491px;top:353px;width:1px;height:17px;background:#808080"></div>
<div class="a" style="left:515px;top:353px;width:21px;height:17px;background:#7e93a6"></div>
<div class="a" style="left:514px;top:353px;width:1px;height:17px;background:#808080"></div>
<div class="a" style="left:537px;top:353px;width:21px;height:17px;background:#3a6697"></div>
<div class="a" style="left:536px;top:353px;width:1px;height:17px;background:#808080"></div>
<div class="t" style="left:536px;top:356px;width:21px;text-align:center;font-size:11px;color:#fff">S</div>
<div class="a" style="left:559px;top:353px;width:21px;height:17px;background:#3a6697"></div>
<div class="a" style="left:558px;top:353px;width:1px;height:17px;background:#808080"></div>
<div class="t" style="left:558px;top:356px;width:21px;text-align:center;font-size:11px;color:#fff">S</div>
<div class="a" style="left:581px;top:353px;width:21px;height:17px;background:#3a6697"></div>
<div class="a" style="left:580px;top:353px;width:1px;height:17px;background:#808080"></div>
<div class="t" style="left:580px;top:356px;width:21px;text-align:center;font-size:11px;color:#fff">S</div>
<div class="a" style="left:603px;top:353px;width:21px;height:17px;background:#3a6697"></div>
<div class="a" style="left:602px;top:353px;width:1px;height:17px;background:#808080"></div>
<div class="t" style="left:602px;top:356px;width:21px;text-align:center;font-size:11px;color:#fff">S</div>
<div class="a" style="left:625px;top:353px;width:21px;height:17px;background:#3a6697"></div>
<div class="a" style="left:624px;top:353px;width:1px;height:17px;background:#808080"></div>
<div class="t" style="left:624px;top:356px;width:21px;text-align:center;font-size:11px;color:#fff">S</div>
<div class="a" style="left:647px;top:353px;width:21px;height:17px;background:#3a6697"></div>
<div class="a" style="left:646px;top:353px;width:1px;height:17px;background:#808080"></div>
<div class="t" style="left:646px;top:356px;width:21px;text-align:center;font-size:11px;color:#fff">S</div>
<div class="a" style="left:669px;top:353px;width:21px;height:17px;background:#7e93a6"></div>
<div class="a" style="left:668px;top:353px;width:1px;height:17px;background:#808080"></div>
<div class="a" style="left:691px;top:353px;width:21px;height:17px;background:#ffffff"></div>
<div class="a" style="left:690px;top:353px;width:1px;height:17px;background:#808080"></div>
<div class="a" style="left:713px;top:353px;width:21px;height:17px;background:#ffffff"></div>
<div class="a" style="left:712px;top:353px;width:1px;height:17px;background:#808080"></div>
<div class="a" style="left:735px;top:353px;width:21px;height:17px;background:#b7c8d8"></div>
<div class="a" style="left:734px;top:353px;width:1px;height:17px;background:#808080"></div>
<div class="t" style="left:734px;top:356px;width:21px;text-align:center;font-size:11px;color:#fff">F</div>
<div class="a" style="left:757px;top:353px;width:21px;height:17px;background:#b7c8d8"></div>
<div class="a" style="left:756px;top:353px;width:1px;height:17px;background:#808080"></div>
<div class="t" style="left:756px;top:356px;width:21px;text-align:center;font-size:11px;color:#fff">F</div>
<div class="a" style="left:779px;top:353px;width:21px;height:17px;background:#b7c8d8"></div>
<div class="a" style="left:778px;top:353px;width:1px;height:17px;background:#808080"></div>
<div class="t" style="left:778px;top:356px;width:21px;text-align:center;font-size:11px;color:#fff">F</div>
<div class="a" style="left:801px;top:353px;width:21px;height:17px;background:#b7c8d8"></div>
<div class="a" style="left:800px;top:353px;width:1px;height:17px;background:#808080"></div>
<div class="t" style="left:800px;top:356px;width:21px;text-align:center;font-size:11px;color:#fff">F</div>
<div class="a" style="left:823px;top:353px;width:21px;height:17px;background:#372a12"></div>
<div class="a" style="left:822px;top:353px;width:1px;height:17px;background:#808080"></div>
<div class="t" style="left:822px;top:356px;width:21px;text-align:center;font-size:11px;color:#fff">N</div>
<div class="a" style="left:845px;top:353px;width:21px;height:17px;background:#372a12"></div>
<div class="a" style="left:844px;top:353px;width:1px;height:17px;background:#808080"></div>
<div class="t" style="left:844px;top:356px;width:21px;text-align:center;font-size:11px;color:#fff">N</div>
<div class="a" style="left:867px;top:353px;width:21px;height:17px;background:#372a12"></div>
<div class="a" style="left:866px;top:353px;width:1px;height:17px;background:#808080"></div>
<div class="t" style="left:866px;top:356px;width:21px;text-align:center;font-size:11px;color:#fff">N</div>
<div class="a" style="left:889px;top:353px;width:21px;height:17px;background:#ffffff"></div>
<div class="a" style="left:888px;top:353px;width:1px;height:17px;background:#808080"></div>
<div class="a" style="left:911px;top:353px;width:21px;height:17px;background:#ffffff"></div>
<div class="a" style="left:910px;top:353px;width:1px;height:17px;background:#808080"></div>
<div class="a" style="left:933px;top:353px;width:21px;height:17px;background:#ffffff"></div>
<div class="a" style="left:932px;top:353px;width:1px;height:17px;background:#808080"></div>
<div class="a" style="left:955px;top:353px;width:21px;height:17px;background:#7e93a6"></div>
<div class="a" style="left:954px;top:353px;width:1px;height:17px;background:#808080"></div>
<div class="a" style="left:977px;top:353px;width:21px;height:17px;background:#7e93a6"></div>
<div class="a" style="left:976px;top:353px;width:1px;height:17px;background:#808080"></div>
<div class="a" style="left:999px;top:353px;width:21px;height:17px;background:#b7c8d8"></div>
<div class="a" style="left:998px;top:353px;width:1px;height:17px;background:#808080"></div>
<div class="t" style="left:998px;top:356px;width:21px;text-align:center;font-size:11px;color:#fff">F</div>
<div class="a" style="left:1021px;top:353px;width:21px;height:17px;background:#b7c8d8"></div>
<div class="a" style="left:1020px;top:353px;width:1px;height:17px;background:#808080"></div>
<div class="t" style="left:1020px;top:356px;width:21px;text-align:center;font-size:11px;color:#fff">F</div>
<div class="a" style="left:1043px;top:353px;width:21px;height:17px;background:#372a12"></div>
<div class="a" style="left:1042px;top:353px;width:1px;height:17px;background:#808080"></div>
<div class="t" style="left:1042px;top:356px;width:21px;text-align:center;font-size:11px;color:#fff">N</div>
<div class="a" style="left:1065px;top:353px;width:21px;height:17px;background:#372a12"></div>
<div class="a" style="left:1064px;top:353px;width:1px;height:17px;background:#808080"></div>
<div class="t" style="left:1064px;top:356px;width:21px;text-align:center;font-size:11px;color:#fff">N</div>
<div class="a" style="left:1087px;top:353px;width:21px;height:17px;background:#372a12"></div>
<div class="a" style="left:1086px;top:353px;width:1px;height:17px;background:#808080"></div>
<div class="t" style="left:1086px;top:356px;width:21px;text-align:center;font-size:11px;color:#fff">N</div>
<div class="a" style="left:1109px;top:353px;width:21px;height:17px;background:#7e93a6"></div>
<div class="a" style="left:1108px;top:353px;width:1px;height:17px;background:#808080"></div>
<div class="a" style="left:1131px;top:353px;width:21px;height:17px;background:#7e93a6"></div>
<div class="a" style="left:1130px;top:353px;width:1px;height:17px;background:#808080"></div>
<div class="a" style="left:1153px;top:353px;width:21px;height:17px;background:#3a6697"></div>
<div class="a" style="left:1152px;top:353px;width:1px;height:17px;background:#808080"></div>
<div class="t" style="left:1152px;top:356px;width:21px;text-align:center;font-size:11px;color:#fff">S</div>
<div class="a" style="left:136px;top:371px;width:1037px;height:1px;background:#fff"></div>
<div class="a" style="left:509px;top:372px;width:576px;height:15px;background:#cdcdcd"></div>
<svg class="a" style="left:496px;top:375px" width="8" height="9" viewBox="0 0 8 9"><path d="M6 0.5L2 4.5L6 8.5" fill="none" stroke="#606060" stroke-width="2"/></svg>
<svg class="a" style="left:1163px;top:375px" width="8" height="9" viewBox="0 0 8 9"><path d="M2 0.5L6 4.5L2 8.5" fill="none" stroke="#606060" stroke-width="2"/></svg>
<div class="a" style="left:136px;top:389px;width:1037px;height:1px;background:#fafafa"></div>
<div class="a" style="left:136px;top:393px;width:1037px;height:2px;background:#808080"></div>
<div class="a" style="left:136px;top:394px;width:1px;height:163px;background:#808080"></div>
<div class="a" style="left:153px;top:394px;width:1px;height:163px;background:#808080"></div>
<div class="a" style="left:491px;top:394px;width:1px;height:163px;background:#808080"></div>
<div class="a" style="left:303px;top:395px;width:1px;height:18px;background:#808080"></div>
<div class="a" style="left:344px;top:395px;width:1px;height:18px;background:#808080"></div>
<div class="a" style="left:412px;top:395px;width:1px;height:18px;background:#808080"></div>
<div class="a" style="left:448px;top:395px;width:1px;height:18px;background:#808080"></div>
<div class="a" style="left:265px;top:450px;width:1px;height:107px;background:#808080"></div>
<div class="a" style="left:377px;top:450px;width:1px;height:107px;background:#808080"></div>
<div class="a" style="left:136px;top:413px;width:355px;height:1px;background:#808080"></div>
<div class="a" style="left:136px;top:431px;width:355px;height:1px;background:#808080"></div>
<div class="a" style="left:136px;top:449px;width:355px;height:1px;background:#808080"></div>
<div class="a" style="left:136px;top:467px;width:355px;height:1px;background:#808080"></div>
<div class="a" style="left:136px;top:485px;width:355px;height:1px;background:#808080"></div>
<div class="a" style="left:136px;top:503px;width:355px;height:1px;background:#808080"></div>
<div class="a" style="left:136px;top:521px;width:355px;height:1px;background:#808080"></div>
<div class="a" style="left:136px;top:539px;width:355px;height:1px;background:#808080"></div>
<div class="t b" style="left:157px;top:399px;font-size:11.7px">Summen</div>
<div class="t" style="left:303px;top:399px;width:39px;text-align:right;font-size:11px">27,0</div>
<div class="t" style="left:344px;top:399px;width:66px;text-align:right;font-size:11px">1600,0 (35,0)</div>
<div class="t" style="left:412px;top:399px;width:35px;text-align:right;font-size:11px">62,0</div>
<div class="t b" style="left:157px;top:417px;font-size:11.7px">Ferienzeiten Rheinland-Pfalz</div>
<div class="t b" style="left:157px;top:435px;font-size:11.7px">Summen Personalstärke/Bedarf</div>
<div class="t r" style="left:155px;top:453px;font-size:11px">F - Frühschicht</div>
<div class="t r" style="left:267px;top:453px;font-size:11px">Schichtleiter</div>
<div class="t r" style="left:155px;top:471px;font-size:11px">F - Frühschicht</div>
<div class="t r" style="left:267px;top:471px;font-size:11px">Maschinenführer</div>
<div class="t r" style="left:155px;top:489px;font-size:11px">S - Spätschicht</div>
<div class="t r" style="left:267px;top:489px;font-size:11px">Schichtleiter</div>
<div class="t r" style="left:155px;top:507px;font-size:11px">S - Spätschicht</div>
<div class="t r" style="left:267px;top:507px;font-size:11px">Maschinenführer</div>
<div class="t r" style="left:155px;top:525px;font-size:11px">N - Nachtschicht</div>
<div class="t r" style="left:267px;top:525px;font-size:11px">Schichtleiter</div>
<div class="t r" style="left:155px;top:543px;font-size:11px">N - Nachtschicht</div>
<div class="t r" style="left:267px;top:543px;font-size:11px">Maschinenführer</div>
<div class="a" style="left:491px;top:395px;width:23px;height:18px;background:#7e93a6"></div>
<div class="a" style="left:514px;top:395px;width:22px;height:18px;background:#7e93a6"></div>
<div class="a" style="left:536px;top:395px;width:22px;height:18px;background:#f0f0f0"></div>
<div class="a" style="left:558px;top:395px;width:22px;height:18px;background:#f0f0f0"></div>
<div class="a" style="left:580px;top:395px;width:22px;height:18px;background:#f0f0f0"></div>
<div class="a" style="left:602px;top:395px;width:22px;height:18px;background:#f0f0f0"></div>
<div class="a" style="left:624px;top:395px;width:22px;height:18px;background:#f0f0f0"></div>
<div class="a" style="left:646px;top:395px;width:22px;height:18px;background:#7e93a6"></div>
<div class="a" style="left:668px;top:395px;width:22px;height:18px;background:#7e93a6"></div>
<div class="a" style="left:690px;top:395px;width:22px;height:18px;background:#f0f0f0"></div>
<div class="a" style="left:712px;top:395px;width:22px;height:18px;background:#f0f0f0"></div>
<div class="a" style="left:734px;top:395px;width:22px;height:18px;background:#f0f0f0"></div>
<div class="a" style="left:756px;top:395px;width:22px;height:18px;background:#f0f0f0"></div>
<div class="a" style="left:778px;top:395px;width:22px;height:18px;background:#f0f0f0"></div>
<div class="a" style="left:800px;top:395px;width:22px;height:18px;background:#7e93a6"></div>
<div class="a" style="left:822px;top:395px;width:22px;height:18px;background:#7e93a6"></div>
<div class="a" style="left:844px;top:395px;width:22px;height:18px;background:#f0f0f0"></div>
<div class="a" style="left:866px;top:395px;width:22px;height:18px;background:#f0f0f0"></div>
<div class="a" style="left:888px;top:395px;width:22px;height:18px;background:#f0f0f0"></div>
<div class="a" style="left:910px;top:395px;width:22px;height:18px;background:#f0f0f0"></div>
<div class="a" style="left:932px;top:395px;width:22px;height:18px;background:#f0f0f0"></div>
<div class="a" style="left:954px;top:395px;width:22px;height:18px;background:#7e93a6"></div>
<div class="a" style="left:976px;top:395px;width:22px;height:18px;background:#7e93a6"></div>
<div class="a" style="left:998px;top:395px;width:22px;height:18px;background:#f0f0f0"></div>
<div class="a" style="left:1020px;top:395px;width:22px;height:18px;background:#f0f0f0"></div>
<div class="a" style="left:1042px;top:395px;width:22px;height:18px;background:#f0f0f0"></div>
<div class="a" style="left:1064px;top:395px;width:22px;height:18px;background:#f0f0f0"></div>
<div class="a" style="left:1086px;top:395px;width:22px;height:18px;background:#f0f0f0"></div>
<div class="a" style="left:1108px;top:395px;width:22px;height:18px;background:#7e93a6"></div>
<div class="a" style="left:1130px;top:395px;width:22px;height:18px;background:#7e93a6"></div>
<div class="a" style="left:1152px;top:395px;width:22px;height:18px;background:#f0f0f0"></div>
<div class="a" style="left:491px;top:413px;width:682px;height:1px;background:#d8d8d8"></div>
<div class="a" style="left:491px;top:414px;width:23px;height:17px;background:#7e93a6"></div>
<div class="a" style="left:514px;top:414px;width:22px;height:17px;background:#7e93a6"></div>
<div class="a" style="left:536px;top:414px;width:22px;height:17px;background:#7e93a6"></div>
<div class="a" style="left:558px;top:414px;width:22px;height:17px;background:#7e93a6"></div>
<div class="a" style="left:580px;top:414px;width:22px;height:17px;background:#7e93a6"></div>
<div class="a" style="left:602px;top:414px;width:22px;height:17px;background:#7e93a6"></div>
<div class="a" style="left:624px;top:414px;width:22px;height:17px;background:#7e93a6"></div>
<div class="a" style="left:646px;top:414px;width:22px;height:17px;background:#7e93a6"></div>
<div class="a" style="left:668px;top:414px;width:22px;height:17px;background:#7e93a6"></div>
<div class="a" style="left:690px;top:414px;width:22px;height:17px;background:#7e93a6"></div>
<div class="a" style="left:712px;top:414px;width:22px;height:17px;background:#7e93a6"></div>
<div class="a" style="left:734px;top:414px;width:22px;height:17px;background:#7e93a6"></div>
<div class="a" style="left:756px;top:414px;width:22px;height:17px;background:#7e93a6"></div>
<div class="a" style="left:778px;top:414px;width:22px;height:17px;background:#7e93a6"></div>
<div class="a" style="left:800px;top:414px;width:22px;height:17px;background:#7e93a6"></div>
<div class="a" style="left:822px;top:414px;width:22px;height:17px;background:#7e93a6"></div>
<div class="a" style="left:844px;top:414px;width:22px;height:17px;background:#f0f0f0"></div>
<div class="a" style="left:866px;top:414px;width:22px;height:17px;background:#f0f0f0"></div>
<div class="a" style="left:888px;top:414px;width:22px;height:17px;background:#f0f0f0"></div>
<div class="a" style="left:910px;top:414px;width:22px;height:17px;background:#f0f0f0"></div>
<div class="a" style="left:932px;top:414px;width:22px;height:17px;background:#f0f0f0"></div>
<div class="a" style="left:954px;top:414px;width:22px;height:17px;background:#7e93a6"></div>
<div class="a" style="left:976px;top:414px;width:22px;height:17px;background:#7e93a6"></div>
<div class="a" style="left:998px;top:414px;width:22px;height:17px;background:#f0f0f0"></div>
<div class="a" style="left:1020px;top:414px;width:22px;height:17px;background:#f0f0f0"></div>
<div class="a" style="left:1042px;top:414px;width:22px;height:17px;background:#f0f0f0"></div>
<div class="a" style="left:1064px;top:414px;width:22px;height:17px;background:#f0f0f0"></div>
<div class="a" style="left:1086px;top:414px;width:22px;height:17px;background:#f0f0f0"></div>
<div class="a" style="left:1108px;top:414px;width:22px;height:17px;background:#7e93a6"></div>
<div class="a" style="left:1130px;top:414px;width:22px;height:17px;background:#7e93a6"></div>
<div class="a" style="left:1152px;top:414px;width:22px;height:17px;background:#f0f0f0"></div>
<div class="a" style="left:491px;top:431px;width:682px;height:1px;background:#d8d8d8"></div>
<div class="a" style="left:491px;top:432px;width:23px;height:17px;background:#7e93a6"></div>
<div class="a" style="left:514px;top:432px;width:22px;height:17px;background:#7e93a6"></div>
<div class="a" style="left:536px;top:432px;width:22px;height:17px;background:#f0f0f0"></div>
<div class="a" style="left:558px;top:432px;width:22px;height:17px;background:#f0f0f0"></div>
<div class="a" style="left:580px;top:432px;width:22px;height:17px;background:#f0f0f0"></div>
<div class="a" style="left:602px;top:432px;width:22px;height:17px;background:#f0f0f0"></div>
<div class="a" style="left:624px;top:432px;width:22px;height:17px;background:#f0f0f0"></div>
<div class="a" style="left:646px;top:432px;width:22px;height:17px;background:#7e93a6"></div>
<div class="a" style="left:668px;top:432px;width:22px;height:17px;background:#7e93a6"></div>
<div class="a" style="left:690px;top:432px;width:22px;height:17px;background:#f0f0f0"></div>
<div class="a" style="left:712px;top:432px;width:22px;height:17px;background:#f0f0f0"></div>
<div class="a" style="left:734px;top:432px;width:22px;height:17px;background:#f0f0f0"></div>
<div class="a" style="left:756px;top:432px;width:22px;height:17px;background:#f0f0f0"></div>
<div class="a" style="left:778px;top:432px;width:22px;height:17px;background:#f0f0f0"></div>
<div class="a" style="left:800px;top:432px;width:22px;height:17px;background:#7e93a6"></div>
<div class="a" style="left:822px;top:432px;width:22px;height:17px;background:#7e93a6"></div>
<div class="a" style="left:844px;top:432px;width:22px;height:17px;background:#f0f0f0"></div>
<div class="a" style="left:866px;top:432px;width:22px;height:17px;background:#f0f0f0"></div>
<div class="a" style="left:888px;top:432px;width:22px;height:17px;background:#f0f0f0"></div>
<div class="a" style="left:910px;top:432px;width:22px;height:17px;background:#f0f0f0"></div>
<div class="a" style="left:932px;top:432px;width:22px;height:17px;background:#f0f0f0"></div>
<div class="a" style="left:954px;top:432px;width:22px;height:17px;background:#7e93a6"></div>
<div class="a" style="left:976px;top:432px;width:22px;height:17px;background:#7e93a6"></div>
<div class="a" style="left:998px;top:432px;width:22px;height:17px;background:#f0f0f0"></div>
<div class="a" style="left:1020px;top:432px;width:22px;height:17px;background:#f0f0f0"></div>
<div class="a" style="left:1042px;top:432px;width:22px;height:17px;background:#f0f0f0"></div>
<div class="a" style="left:1064px;top:432px;width:22px;height:17px;background:#f0f0f0"></div>
<div class="a" style="left:1086px;top:432px;width:22px;height:17px;background:#f0f0f0"></div>
<div class="a" style="left:1108px;top:432px;width:22px;height:17px;background:#7e93a6"></div>
<div class="a" style="left:1130px;top:432px;width:22px;height:17px;background:#7e93a6"></div>
<div class="a" style="left:1152px;top:432px;width:22px;height:17px;background:#f0f0f0"></div>
<div class="a" style="left:491px;top:449px;width:682px;height:1px;background:#d8d8d8"></div>
<div class="a" style="left:491px;top:450px;width:23px;height:17px;background:#7e93a6"></div>
<div class="t" style="left:491px;top:454px;width:23px;text-align:center;font-size:11px">1</div>
<div class="a" style="left:514px;top:450px;width:22px;height:17px;background:#7e93a6"></div>
<div class="a" style="left:536px;top:450px;width:22px;height:17px;background:#7e93a6"></div>
<div class="t" style="left:536px;top:454px;width:22px;text-align:center;font-size:11px">1</div>
<div class="a" style="left:558px;top:450px;width:22px;height:17px;background:#7e93a6"></div>
<div class="t" style="left:558px;top:454px;width:22px;text-align:center;font-size:11px">1</div>
<div class="a" style="left:580px;top:450px;width:22px;height:17px;background:#7e93a6"></div>
<div class="t" style="left:580px;top:454px;width:22px;text-align:center;font-size:11px">1</div>
<div class="a" style="left:602px;top:450px;width:22px;height:17px;background:#7e93a6"></div>
<div class="t" style="left:602px;top:454px;width:22px;text-align:center;font-size:11px">1</div>
<div class="a" style="left:624px;top:450px;width:22px;height:17px;background:#7e93a6"></div>
<div class="t" style="left:624px;top:454px;width:22px;text-align:center;font-size:11px">1</div>
<div class="a" style="left:646px;top:450px;width:22px;height:17px;background:#7e93a6"></div>
<div class="t" style="left:646px;top:454px;width:22px;text-align:center;font-size:11px">1</div>
<div class="a" style="left:668px;top:450px;width:22px;height:17px;background:#7e93a6"></div>
<div class="a" style="left:690px;top:450px;width:22px;height:17px;background:#7e93a6"></div>
<div class="t" style="left:690px;top:454px;width:22px;text-align:center;font-size:11px">1</div>
<div class="a" style="left:712px;top:450px;width:22px;height:17px;background:#7e93a6"></div>
<div class="t" style="left:712px;top:454px;width:22px;text-align:center;font-size:11px">1</div>
<div class="a" style="left:734px;top:450px;width:22px;height:17px;background:#7e93a6"></div>
<div class="t" style="left:734px;top:454px;width:22px;text-align:center;font-size:11px">1</div>
<div class="a" style="left:756px;top:450px;width:22px;height:17px;background:#7e93a6"></div>
<div class="t" style="left:756px;top:454px;width:22px;text-align:center;font-size:11px">1</div>
<div class="a" style="left:778px;top:450px;width:22px;height:17px;background:#7e93a6"></div>
<div class="t" style="left:778px;top:454px;width:22px;text-align:center;font-size:11px">1</div>
<div class="a" style="left:800px;top:450px;width:22px;height:17px;background:#7e93a6"></div>
<div class="t" style="left:800px;top:454px;width:22px;text-align:center;font-size:11px">1</div>
<div class="a" style="left:822px;top:450px;width:22px;height:17px;background:#7e93a6"></div>
<div class="a" style="left:844px;top:450px;width:22px;height:17px;background:#7e93a6"></div>
<div class="t" style="left:844px;top:454px;width:22px;text-align:center;font-size:11px">1</div>
<div class="a" style="left:866px;top:450px;width:22px;height:17px;background:#7e93a6"></div>
<div class="t" style="left:866px;top:454px;width:22px;text-align:center;font-size:11px">1</div>
<div class="a" style="left:888px;top:450px;width:22px;height:17px;background:#7e93a6"></div>
<div class="t" style="left:888px;top:454px;width:22px;text-align:center;font-size:11px">1</div>
<div class="a" style="left:910px;top:450px;width:22px;height:17px;background:#7e93a6"></div>
<div class="t" style="left:910px;top:454px;width:22px;text-align:center;font-size:11px">1</div>
<div class="a" style="left:932px;top:450px;width:22px;height:17px;background:#7e93a6"></div>
<div class="t" style="left:932px;top:454px;width:22px;text-align:center;font-size:11px">1</div>
<div class="a" style="left:954px;top:450px;width:22px;height:17px;background:#7e93a6"></div>
<div class="t" style="left:954px;top:454px;width:22px;text-align:center;font-size:11px">1</div>
<div class="a" style="left:976px;top:450px;width:22px;height:17px;background:#7e93a6"></div>
<div class="a" style="left:998px;top:450px;width:22px;height:17px;background:#7e93a6"></div>
<div class="t" style="left:998px;top:454px;width:22px;text-align:center;font-size:11px">1</div>
<div class="a" style="left:1020px;top:450px;width:22px;height:17px;background:#7e93a6"></div>
<div class="t" style="left:1020px;top:454px;width:22px;text-align:center;font-size:11px">1</div>
<div class="a" style="left:1042px;top:450px;width:22px;height:17px;background:#7e93a6"></div>
<div class="t" style="left:1042px;top:454px;width:22px;text-align:center;font-size:11px">1</div>
<div class="a" style="left:1064px;top:450px;width:22px;height:17px;background:#7e93a6"></div>
<div class="t" style="left:1064px;top:454px;width:22px;text-align:center;font-size:11px">1</div>
<div class="a" style="left:1086px;top:450px;width:22px;height:17px;background:#7e93a6"></div>
<div class="t" style="left:1086px;top:454px;width:22px;text-align:center;font-size:11px">1</div>
<div class="a" style="left:1108px;top:450px;width:22px;height:17px;background:#7e93a6"></div>
<div class="t" style="left:1108px;top:454px;width:22px;text-align:center;font-size:11px">1</div>
<div class="a" style="left:1130px;top:450px;width:22px;height:17px;background:#7e93a6"></div>
<div class="a" style="left:1152px;top:450px;width:22px;height:17px;background:#7e93a6"></div>
<div class="t" style="left:1152px;top:454px;width:22px;text-align:center;font-size:11px">1</div>
<div class="a" style="left:491px;top:467px;width:682px;height:1px;background:#d8d8d8"></div>
<div class="a" style="left:491px;top:468px;width:23px;height:17px;background:#7e93a6"></div>
<div class="t" style="left:491px;top:472px;width:23px;text-align:center;font-size:11px">1</div>
<div class="a" style="left:514px;top:468px;width:22px;height:17px;background:#7e93a6"></div>
<div class="a" style="left:536px;top:468px;width:22px;height:17px;background:#7e93a6"></div>
<div class="t" style="left:536px;top:472px;width:22px;text-align:center;font-size:11px">1</div>
<div class="a" style="left:558px;top:468px;width:22px;height:17px;background:#7e93a6"></div>
<div class="t" style="left:558px;top:472px;width:22px;text-align:center;font-size:11px">1</div>
<div class="a" style="left:580px;top:468px;width:22px;height:17px;background:#7e93a6"></div>
<div class="t" style="left:580px;top:472px;width:22px;text-align:center;font-size:11px">1</div>
<div class="a" style="left:602px;top:468px;width:22px;height:17px;background:#7e93a6"></div>
<div class="t" style="left:602px;top:472px;width:22px;text-align:center;font-size:11px">1</div>
<div class="a" style="left:624px;top:468px;width:22px;height:17px;background:#7e93a6"></div>
<div class="t" style="left:624px;top:472px;width:22px;text-align:center;font-size:11px">1</div>
<div class="a" style="left:646px;top:468px;width:22px;height:17px;background:#7e93a6"></div>
<div class="t" style="left:646px;top:472px;width:22px;text-align:center;font-size:11px">1</div>
<div class="a" style="left:668px;top:468px;width:22px;height:17px;background:#7e93a6"></div>
<div class="a" style="left:690px;top:468px;width:22px;height:17px;background:#7e93a6"></div>
<div class="t" style="left:690px;top:472px;width:22px;text-align:center;font-size:11px">1</div>
<div class="a" style="left:712px;top:468px;width:22px;height:17px;background:#7e93a6"></div>
<div class="t" style="left:712px;top:472px;width:22px;text-align:center;font-size:11px">1</div>
<div class="a" style="left:734px;top:468px;width:22px;height:17px;background:#7e93a6"></div>
<div class="t" style="left:734px;top:472px;width:22px;text-align:center;font-size:11px">1</div>
<div class="a" style="left:756px;top:468px;width:22px;height:17px;background:#7e93a6"></div>
<div class="t" style="left:756px;top:472px;width:22px;text-align:center;font-size:11px">1</div>
<div class="a" style="left:778px;top:468px;width:22px;height:17px;background:#7e93a6"></div>
<div class="t" style="left:778px;top:472px;width:22px;text-align:center;font-size:11px">1</div>
<div class="a" style="left:800px;top:468px;width:22px;height:17px;background:#7e93a6"></div>
<div class="t" style="left:800px;top:472px;width:22px;text-align:center;font-size:11px">1</div>
<div class="a" style="left:822px;top:468px;width:22px;height:17px;background:#7e93a6"></div>
<div class="a" style="left:844px;top:468px;width:22px;height:17px;background:#7e93a6"></div>
<div class="t" style="left:844px;top:472px;width:22px;text-align:center;font-size:11px">1</div>
<div class="a" style="left:866px;top:468px;width:22px;height:17px;background:#7e93a6"></div>
<div class="t" style="left:866px;top:472px;width:22px;text-align:center;font-size:11px">1</div>
<div class="a" style="left:888px;top:468px;width:22px;height:17px;background:#7e93a6"></div>
<div class="t" style="left:888px;top:472px;width:22px;text-align:center;font-size:11px">1</div>
<div class="a" style="left:910px;top:468px;width:22px;height:17px;background:#7e93a6"></div>
<div class="t" style="left:910px;top:472px;width:22px;text-align:center;font-size:11px">1</div>
<div class="a" style="left:932px;top:468px;width:22px;height:17px;background:#7e93a6"></div>
<div class="t" style="left:932px;top:472px;width:22px;text-align:center;font-size:11px">1</div>
<div class="a" style="left:954px;top:468px;width:22px;height:17px;background:#7e93a6"></div>
<div class="t" style="left:954px;top:472px;width:22px;text-align:center;font-size:11px">1</div>
<div class="a" style="left:976px;top:468px;width:22px;height:17px;background:#7e93a6"></div>
<div class="a" style="left:998px;top:468px;width:22px;height:17px;background:#7e93a6"></div>
<div class="t" style="left:998px;top:472px;width:22px;text-align:center;font-size:11px">1</div>
<div class="a" style="left:1020px;top:468px;width:22px;height:17px;background:#7e93a6"></div>
<div class="t" style="left:1020px;top:472px;width:22px;text-align:center;font-size:11px">1</div>
<div class="a" style="left:1042px;top:468px;width:22px;height:17px;background:#7e93a6"></div>
<div class="t" style="left:1042px;top:472px;width:22px;text-align:center;font-size:11px">1</div>
<div class="a" style="left:1064px;top:468px;width:22px;height:17px;background:#7e93a6"></div>
<div class="t" style="left:1064px;top:472px;width:22px;text-align:center;font-size:11px">1</div>
<div class="a" style="left:1086px;top:468px;width:22px;height:17px;background:#7e93a6"></div>
<div class="t" style="left:1086px;top:472px;width:22px;text-align:center;font-size:11px">1</div>
<div class="a" style="left:1108px;top:468px;width:22px;height:17px;background:#7e93a6"></div>
<div class="t" style="left:1108px;top:472px;width:22px;text-align:center;font-size:11px">1</div>
<div class="a" style="left:1130px;top:468px;width:22px;height:17px;background:#7e93a6"></div>
<div class="a" style="left:1152px;top:468px;width:22px;height:17px;background:#7e93a6"></div>
<div class="t" style="left:1152px;top:472px;width:22px;text-align:center;font-size:11px">1</div>
<div class="a" style="left:491px;top:485px;width:682px;height:1px;background:#d8d8d8"></div>
<div class="a" style="left:491px;top:486px;width:23px;height:17px;background:#7e93a6"></div>
<div class="t" style="left:491px;top:490px;width:23px;text-align:center;font-size:11px">1</div>
<div class="a" style="left:514px;top:486px;width:22px;height:17px;background:#7e93a6"></div>
<div class="a" style="left:536px;top:486px;width:22px;height:17px;background:#7e93a6"></div>
<div class="t" style="left:536px;top:490px;width:22px;text-align:center;font-size:11px">1</div>
<div class="a" style="left:558px;top:486px;width:22px;height:17px;background:#7e93a6"></div>
<div class="t" style="left:558px;top:490px;width:22px;text-align:center;font-size:11px">1</div>
<div class="a" style="left:580px;top:486px;width:22px;height:17px;background:#7e93a6"></div>
<div class="t" style="left:580px;top:490px;width:22px;text-align:center;font-size:11px">1</div>
<div class="a" style="left:602px;top:486px;width:22px;height:17px;background:#7e93a6"></div>
<div class="t" style="left:602px;top:490px;width:22px;text-align:center;font-size:11px">1</div>
<div class="a" style="left:624px;top:486px;width:22px;height:17px;background:#7e93a6"></div>
<div class="t" style="left:624px;top:490px;width:22px;text-align:center;font-size:11px">1</div>
<div class="a" style="left:646px;top:486px;width:22px;height:17px;background:#7e93a6"></div>
<div class="t" style="left:646px;top:490px;width:22px;text-align:center;font-size:11px">1</div>
<div class="a" style="left:668px;top:486px;width:22px;height:17px;background:#7e93a6"></div>
<div class="a" style="left:690px;top:486px;width:22px;height:17px;background:#7e93a6"></div>
<div class="t" style="left:690px;top:490px;width:22px;text-align:center;font-size:11px">1</div>
<div class="a" style="left:712px;top:486px;width:22px;height:17px;background:#7e93a6"></div>
<div class="t" style="left:712px;top:490px;width:22px;text-align:center;font-size:11px">1</div>
<div class="a" style="left:734px;top:486px;width:22px;height:17px;background:#7e93a6"></div>
<div class="t" style="left:734px;top:490px;width:22px;text-align:center;font-size:11px">1</div>
<div class="a" style="left:756px;top:486px;width:22px;height:17px;background:#7e93a6"></div>
<div class="t" style="left:756px;top:490px;width:22px;text-align:center;font-size:11px">1</div>
<div class="a" style="left:778px;top:486px;width:22px;height:17px;background:#7e93a6"></div>
<div class="t" style="left:778px;top:490px;width:22px;text-align:center;font-size:11px">1</div>
<div class="a" style="left:800px;top:486px;width:22px;height:17px;background:#7e93a6"></div>
<div class="t" style="left:800px;top:490px;width:22px;text-align:center;font-size:11px">1</div>
<div class="a" style="left:822px;top:486px;width:22px;height:17px;background:#7e93a6"></div>
<div class="a" style="left:844px;top:486px;width:22px;height:17px;background:#7e93a6"></div>
<div class="t" style="left:844px;top:490px;width:22px;text-align:center;font-size:11px">1</div>
<div class="a" style="left:866px;top:486px;width:22px;height:17px;background:#7e93a6"></div>
<div class="t" style="left:866px;top:490px;width:22px;text-align:center;font-size:11px">1</div>
<div class="a" style="left:888px;top:486px;width:22px;height:17px;background:#7e93a6"></div>
<div class="t" style="left:888px;top:490px;width:22px;text-align:center;font-size:11px">1</div>
<div class="a" style="left:910px;top:486px;width:22px;height:17px;background:#7e93a6"></div>
<div class="t" style="left:910px;top:490px;width:22px;text-align:center;font-size:11px">1</div>
<div class="a" style="left:932px;top:486px;width:22px;height:17px;background:#7e93a6"></div>
<div class="t" style="left:932px;top:490px;width:22px;text-align:center;font-size:11px">1</div>
<div class="a" style="left:954px;top:486px;width:22px;height:17px;background:#7e93a6"></div>
<div class="t" style="left:954px;top:490px;width:22px;text-align:center;font-size:11px">1</div>
<div class="a" style="left:976px;top:486px;width:22px;height:17px;background:#7e93a6"></div>
<div class="a" style="left:998px;top:486px;width:22px;height:17px;background:#7e93a6"></div>
<div class="t" style="left:998px;top:490px;width:22px;text-align:center;font-size:11px">1</div>
<div class="a" style="left:1020px;top:486px;width:22px;height:17px;background:#7e93a6"></div>
<div class="t" style="left:1020px;top:490px;width:22px;text-align:center;font-size:11px">1</div>
<div class="a" style="left:1042px;top:486px;width:22px;height:17px;background:#7e93a6"></div>
<div class="t" style="left:1042px;top:490px;width:22px;text-align:center;font-size:11px">1</div>
<div class="a" style="left:1064px;top:486px;width:22px;height:17px;background:#7e93a6"></div>
<div class="t" style="left:1064px;top:490px;width:22px;text-align:center;font-size:11px">1</div>
<div class="a" style="left:1086px;top:486px;width:22px;height:17px;background:#7e93a6"></div>
<div class="t" style="left:1086px;top:490px;width:22px;text-align:center;font-size:11px">1</div>
<div class="a" style="left:1108px;top:486px;width:22px;height:17px;background:#7e93a6"></div>
<div class="t" style="left:1108px;top:490px;width:22px;text-align:center;font-size:11px">1</div>
<div class="a" style="left:1130px;top:486px;width:22px;height:17px;background:#7e93a6"></div>
<div class="a" style="left:1152px;top:486px;width:22px;height:17px;background:#7e93a6"></div>
<div class="t" style="left:1152px;top:490px;width:22px;text-align:center;font-size:11px">1</div>
<div class="a" style="left:491px;top:503px;width:682px;height:1px;background:#d8d8d8"></div>
<div class="a" style="left:491px;top:504px;width:23px;height:17px;background:#7e93a6"></div>
<div class="t" style="left:491px;top:508px;width:23px;text-align:center;font-size:11px">1</div>
<div class="a" style="left:514px;top:504px;width:22px;height:17px;background:#7e93a6"></div>
<div class="a" style="left:536px;top:504px;width:22px;height:17px;background:#7e93a6"></div>
<div class="t" style="left:536px;top:508px;width:22px;text-align:center;font-size:11px">1</div>
<div class="a" style="left:558px;top:504px;width:22px;height:17px;background:#7e93a6"></div>
<div class="t" style="left:558px;top:508px;width:22px;text-align:center;font-size:11px">1</div>
<div class="a" style="left:580px;top:504px;width:22px;height:17px;background:#7e93a6"></div>
<div class="t" style="left:580px;top:508px;width:22px;text-align:center;font-size:11px">1</div>
<div class="a" style="left:602px;top:504px;width:22px;height:17px;background:#7e93a6"></div>
<div class="t" style="left:602px;top:508px;width:22px;text-align:center;font-size:11px">1</div>
<div class="a" style="left:624px;top:504px;width:22px;height:17px;background:#7e93a6"></div>
<div class="t" style="left:624px;top:508px;width:22px;text-align:center;font-size:11px">1</div>
<div class="a" style="left:646px;top:504px;width:22px;height:17px;background:#7e93a6"></div>
<div class="t" style="left:646px;top:508px;width:22px;text-align:center;font-size:11px">1</div>
<div class="a" style="left:668px;top:504px;width:22px;height:17px;background:#7e93a6"></div>
<div class="a" style="left:690px;top:504px;width:22px;height:17px;background:#7e93a6"></div>
<div class="t" style="left:690px;top:508px;width:22px;text-align:center;font-size:11px">1</div>
<div class="a" style="left:712px;top:504px;width:22px;height:17px;background:#7e93a6"></div>
<div class="t" style="left:712px;top:508px;width:22px;text-align:center;font-size:11px">1</div>
<div class="a" style="left:734px;top:504px;width:22px;height:17px;background:#7e93a6"></div>
<div class="t" style="left:734px;top:508px;width:22px;text-align:center;font-size:11px">1</div>
<div class="a" style="left:756px;top:504px;width:22px;height:17px;background:#7e93a6"></div>
<div class="t" style="left:756px;top:508px;width:22px;text-align:center;font-size:11px">1</div>
<div class="a" style="left:778px;top:504px;width:22px;height:17px;background:#7e93a6"></div>
<div class="t" style="left:778px;top:508px;width:22px;text-align:center;font-size:11px">1</div>
<div class="a" style="left:800px;top:504px;width:22px;height:17px;background:#7e93a6"></div>
<div class="t" style="left:800px;top:508px;width:22px;text-align:center;font-size:11px">1</div>
<div class="a" style="left:822px;top:504px;width:22px;height:17px;background:#7e93a6"></div>
<div class="a" style="left:844px;top:504px;width:22px;height:17px;background:#7e93a6"></div>
<div class="t" style="left:844px;top:508px;width:22px;text-align:center;font-size:11px">1</div>
<div class="a" style="left:866px;top:504px;width:22px;height:17px;background:#7e93a6"></div>
<div class="t" style="left:866px;top:508px;width:22px;text-align:center;font-size:11px">1</div>
<div class="a" style="left:888px;top:504px;width:22px;height:17px;background:#7e93a6"></div>
<div class="t" style="left:888px;top:508px;width:22px;text-align:center;font-size:11px">1</div>
<div class="a" style="left:910px;top:504px;width:22px;height:17px;background:#7e93a6"></div>
<div class="t" style="left:910px;top:508px;width:22px;text-align:center;font-size:11px">1</div>
<div class="a" style="left:932px;top:504px;width:22px;height:17px;background:#7e93a6"></div>
<div class="t" style="left:932px;top:508px;width:22px;text-align:center;font-size:11px">1</div>
<div class="a" style="left:954px;top:504px;width:22px;height:17px;background:#7e93a6"></div>
<div class="t" style="left:954px;top:508px;width:22px;text-align:center;font-size:11px">1</div>
<div class="a" style="left:976px;top:504px;width:22px;height:17px;background:#7e93a6"></div>
<div class="a" style="left:998px;top:504px;width:22px;height:17px;background:#7e93a6"></div>
<div class="t" style="left:998px;top:508px;width:22px;text-align:center;font-size:11px">1</div>
<div class="a" style="left:1020px;top:504px;width:22px;height:17px;background:#7e93a6"></div>
<div class="t" style="left:1020px;top:508px;width:22px;text-align:center;font-size:11px">1</div>
<div class="a" style="left:1042px;top:504px;width:22px;height:17px;background:#7e93a6"></div>
<div class="t" style="left:1042px;top:508px;width:22px;text-align:center;font-size:11px">1</div>
<div class="a" style="left:1064px;top:504px;width:22px;height:17px;background:#7e93a6"></div>
<div class="t" style="left:1064px;top:508px;width:22px;text-align:center;font-size:11px">1</div>
<div class="a" style="left:1086px;top:504px;width:22px;height:17px;background:#7e93a6"></div>
<div class="t" style="left:1086px;top:508px;width:22px;text-align:center;font-size:11px">1</div>
<div class="a" style="left:1108px;top:504px;width:22px;height:17px;background:#7e93a6"></div>
<div class="t" style="left:1108px;top:508px;width:22px;text-align:center;font-size:11px">1</div>
<div class="a" style="left:1130px;top:504px;width:22px;height:17px;background:#7e93a6"></div>
<div class="a" style="left:1152px;top:504px;width:22px;height:17px;background:#7e93a6"></div>
<div class="t" style="left:1152px;top:508px;width:22px;text-align:center;font-size:11px">1</div>
<div class="a" style="left:491px;top:521px;width:682px;height:1px;background:#d8d8d8"></div>
<div class="a" style="left:491px;top:522px;width:23px;height:17px;background:#7e93a6"></div>
<div class="a" style="left:514px;top:522px;width:22px;height:17px;background:#7e93a6"></div>
<div class="t" style="left:514px;top:526px;width:22px;text-align:center;font-size:11px">1</div>
<div class="a" style="left:536px;top:522px;width:22px;height:17px;background:#7e93a6"></div>
<div class="t" style="left:536px;top:526px;width:22px;text-align:center;font-size:11px">1</div>
<div class="a" style="left:558px;top:522px;width:22px;height:17px;background:#7e93a6"></div>
<div class="t" style="left:558px;top:526px;width:22px;text-align:center;font-size:11px">1</div>
<div class="a" style="left:580px;top:522px;width:22px;height:17px;background:#7e93a6"></div>
<div class="t" style="left:580px;top:526px;width:22px;text-align:center;font-size:11px">1</div>
<div class="a" style="left:602px;top:522px;width:22px;height:17px;background:#7e93a6"></div>
<div class="t" style="left:602px;top:526px;width:22px;text-align:center;font-size:11px">1</div>
<div class="a" style="left:624px;top:522px;width:22px;height:17px;background:#7e93a6"></div>
<div class="t" style="left:624px;top:526px;width:22px;text-align:center;font-size:11px">1</div>
<div class="a" style="left:646px;top:522px;width:22px;height:17px;background:#7e93a6"></div>
<div class="a" style="left:668px;top:522px;width:22px;height:17px;background:#7e93a6"></div>
<div class="t" style="left:668px;top:526px;width:22px;text-align:center;font-size:11px">1</div>
<div class="a" style="left:690px;top:522px;width:22px;height:17px;background:#7e93a6"></div>
<div class="t" style="left:690px;top:526px;width:22px;text-align:center;font-size:11px">1</div>
<div class="a" style="left:712px;top:522px;width:22px;height:17px;background:#7e93a6"></div>
<div class="t" style="left:712px;top:526px;width:22px;text-align:center;font-size:11px">1</div>
<div class="a" style="left:734px;top:522px;width:22px;height:17px;background:#7e93a6"></div>
<div class="t" style="left:734px;top:526px;width:22px;text-align:center;font-size:11px">1</div>
<div class="a" style="left:756px;top:522px;width:22px;height:17px;background:#7e93a6"></div>
<div class="t" style="left:756px;top:526px;width:22px;text-align:center;font-size:11px">1</div>
<div class="a" style="left:778px;top:522px;width:22px;height:17px;background:#7e93a6"></div>
<div class="t" style="left:778px;top:526px;width:22px;text-align:center;font-size:11px">1</div>
<div class="a" style="left:800px;top:522px;width:22px;height:17px;background:#7e93a6"></div>
<div class="a" style="left:822px;top:522px;width:22px;height:17px;background:#7e93a6"></div>
<div class="t" style="left:822px;top:526px;width:22px;text-align:center;font-size:11px">1</div>
<div class="a" style="left:844px;top:522px;width:22px;height:17px;background:#7e93a6"></div>
<div class="t" style="left:844px;top:526px;width:22px;text-align:center;font-size:11px">1</div>
<div class="a" style="left:866px;top:522px;width:22px;height:17px;background:#7e93a6"></div>
<div class="t" style="left:866px;top:526px;width:22px;text-align:center;font-size:11px">1</div>
<div class="a" style="left:888px;top:522px;width:22px;height:17px;background:#7e93a6"></div>
<div class="t" style="left:888px;top:526px;width:22px;text-align:center;font-size:11px">1</div>
<div class="a" style="left:910px;top:522px;width:22px;height:17px;background:#7e93a6"></div>
<div class="t" style="left:910px;top:526px;width:22px;text-align:center;font-size:11px">1</div>
<div class="a" style="left:932px;top:522px;width:22px;height:17px;background:#7e93a6"></div>
<div class="t" style="left:932px;top:526px;width:22px;text-align:center;font-size:11px">1</div>
<div class="a" style="left:954px;top:522px;width:22px;height:17px;background:#7e93a6"></div>
<div class="a" style="left:976px;top:522px;width:22px;height:17px;background:#7e93a6"></div>
<div class="t" style="left:976px;top:526px;width:22px;text-align:center;font-size:11px">1</div>
<div class="a" style="left:998px;top:522px;width:22px;height:17px;background:#7e93a6"></div>
<div class="t" style="left:998px;top:526px;width:22px;text-align:center;font-size:11px">1</div>
<div class="a" style="left:1020px;top:522px;width:22px;height:17px;background:#7e93a6"></div>
<div class="t" style="left:1020px;top:526px;width:22px;text-align:center;font-size:11px">1</div>
<div class="a" style="left:1042px;top:522px;width:22px;height:17px;background:#7e93a6"></div>
<div class="t" style="left:1042px;top:526px;width:22px;text-align:center;font-size:11px">1</div>
<div class="a" style="left:1064px;top:522px;width:22px;height:17px;background:#7e93a6"></div>
<div class="t" style="left:1064px;top:526px;width:22px;text-align:center;font-size:11px">1</div>
<div class="a" style="left:1086px;top:522px;width:22px;height:17px;background:#7e93a6"></div>
<div class="t" style="left:1086px;top:526px;width:22px;text-align:center;font-size:11px">1</div>
<div class="a" style="left:1108px;top:522px;width:22px;height:17px;background:#7e93a6"></div>
<div class="a" style="left:1130px;top:522px;width:22px;height:17px;background:#7e93a6"></div>
<div class="t" style="left:1130px;top:526px;width:22px;text-align:center;font-size:11px">1</div>
<div class="a" style="left:1152px;top:522px;width:22px;height:17px;background:#7e93a6"></div>
<div class="t" style="left:1152px;top:526px;width:22px;text-align:center;font-size:11px">1</div>
<div class="a" style="left:491px;top:539px;width:682px;height:1px;background:#d8d8d8"></div>
<div class="a" style="left:491px;top:540px;width:23px;height:17px;background:#7e93a6"></div>
<div class="a" style="left:514px;top:540px;width:22px;height:17px;background:#7e93a6"></div>
<div class="t" style="left:514px;top:544px;width:22px;text-align:center;font-size:11px">1</div>
<div class="a" style="left:536px;top:540px;width:22px;height:17px;background:#7e93a6"></div>
<div class="t" style="left:536px;top:544px;width:22px;text-align:center;font-size:11px">1</div>
<div class="a" style="left:558px;top:540px;width:22px;height:17px;background:#7e93a6"></div>
<div class="t" style="left:558px;top:544px;width:22px;text-align:center;font-size:11px">1</div>
<div class="a" style="left:580px;top:540px;width:22px;height:17px;background:#7e93a6"></div>
<div class="t" style="left:580px;top:544px;width:22px;text-align:center;font-size:11px">1</div>
<div class="a" style="left:602px;top:540px;width:22px;height:17px;background:#7e93a6"></div>
<div class="t" style="left:602px;top:544px;width:22px;text-align:center;font-size:11px">1</div>
<div class="a" style="left:624px;top:540px;width:22px;height:17px;background:#7e93a6"></div>
<div class="t" style="left:624px;top:544px;width:22px;text-align:center;font-size:11px">1</div>
<div class="a" style="left:646px;top:540px;width:22px;height:17px;background:#7e93a6"></div>
<div class="a" style="left:668px;top:540px;width:22px;height:17px;background:#7e93a6"></div>
<div class="t" style="left:668px;top:544px;width:22px;text-align:center;font-size:11px">1</div>
<div class="a" style="left:690px;top:540px;width:22px;height:17px;background:#7e93a6"></div>
<div class="t" style="left:690px;top:544px;width:22px;text-align:center;font-size:11px">1</div>
<div class="a" style="left:712px;top:540px;width:22px;height:17px;background:#7e93a6"></div>
<div class="t" style="left:712px;top:544px;width:22px;text-align:center;font-size:11px">1</div>
<div class="a" style="left:734px;top:540px;width:22px;height:17px;background:#7e93a6"></div>
<div class="t" style="left:734px;top:544px;width:22px;text-align:center;font-size:11px">1</div>
<div class="a" style="left:756px;top:540px;width:22px;height:17px;background:#7e93a6"></div>
<div class="t" style="left:756px;top:544px;width:22px;text-align:center;font-size:11px">1</div>
<div class="a" style="left:778px;top:540px;width:22px;height:17px;background:#7e93a6"></div>
<div class="t" style="left:778px;top:544px;width:22px;text-align:center;font-size:11px">1</div>
<div class="a" style="left:800px;top:540px;width:22px;height:17px;background:#7e93a6"></div>
<div class="a" style="left:822px;top:540px;width:22px;height:17px;background:#7e93a6"></div>
<div class="t" style="left:822px;top:544px;width:22px;text-align:center;font-size:11px">1</div>
<div class="a" style="left:844px;top:540px;width:22px;height:17px;background:#7e93a6"></div>
<div class="t" style="left:844px;top:544px;width:22px;text-align:center;font-size:11px">1</div>
<div class="a" style="left:866px;top:540px;width:22px;height:17px;background:#7e93a6"></div>
<div class="t" style="left:866px;top:544px;width:22px;text-align:center;font-size:11px">1</div>
<div class="a" style="left:888px;top:540px;width:22px;height:17px;background:#7e93a6"></div>
<div class="t" style="left:888px;top:544px;width:22px;text-align:center;font-size:11px">1</div>
<div class="a" style="left:910px;top:540px;width:22px;height:17px;background:#7e93a6"></div>
<div class="t" style="left:910px;top:544px;width:22px;text-align:center;font-size:11px">1</div>
<div class="a" style="left:932px;top:540px;width:22px;height:17px;background:#7e93a6"></div>
<div class="t" style="left:932px;top:544px;width:22px;text-align:center;font-size:11px">1</div>
<div class="a" style="left:954px;top:540px;width:22px;height:17px;background:#7e93a6"></div>
<div class="a" style="left:976px;top:540px;width:22px;height:17px;background:#7e93a6"></div>
<div class="t" style="left:976px;top:544px;width:22px;text-align:center;font-size:11px">1</div>
<div class="a" style="left:998px;top:540px;width:22px;height:17px;background:#7e93a6"></div>
<div class="t" style="left:998px;top:544px;width:22px;text-align:center;font-size:11px">1</div>
<div class="a" style="left:1020px;top:540px;width:22px;height:17px;background:#7e93a6"></div>
<div class="t" style="left:1020px;top:544px;width:22px;text-align:center;font-size:11px">1</div>
<div class="a" style="left:1042px;top:540px;width:22px;height:17px;background:#7e93a6"></div>
<div class="t" style="left:1042px;top:544px;width:22px;text-align:center;font-size:11px">1</div>
<div class="a" style="left:1064px;top:540px;width:22px;height:17px;background:#7e93a6"></div>
<div class="t" style="left:1064px;top:544px;width:22px;text-align:center;font-size:11px">1</div>
<div class="a" style="left:1086px;top:540px;width:22px;height:17px;background:#7e93a6"></div>
<div class="t" style="left:1086px;top:544px;width:22px;text-align:center;font-size:11px">1</div>
<div class="a" style="left:1108px;top:540px;width:22px;height:17px;background:#7e93a6"></div>
<div class="a" style="left:1130px;top:540px;width:22px;height:17px;background:#7e93a6"></div>
<div class="t" style="left:1130px;top:544px;width:22px;text-align:center;font-size:11px">1</div>
<div class="a" style="left:1152px;top:540px;width:22px;height:17px;background:#7e93a6"></div>
<div class="t" style="left:1152px;top:544px;width:22px;text-align:center;font-size:11px">1</div>
<div class="a" style="left:491px;top:395px;width:1px;height:18px;background:#808080"></div>
<div class="a" style="left:491px;top:413px;width:1px;height:18px;background:#808080"></div>
<div class="a" style="left:491px;top:431px;width:1px;height:126px;background:#808080"></div>
<div class="a" style="left:514px;top:395px;width:1px;height:18px;background:#808080"></div>
<div class="a" style="left:514px;top:431px;width:1px;height:126px;background:#808080"></div>
<div class="a" style="left:536px;top:395px;width:1px;height:18px;background:#808080"></div>
<div class="a" style="left:536px;top:431px;width:1px;height:126px;background:#808080"></div>
<div class="a" style="left:558px;top:395px;width:1px;height:18px;background:#808080"></div>
<div class="a" style="left:558px;top:431px;width:1px;height:126px;background:#808080"></div>
<div class="a" style="left:580px;top:395px;width:1px;height:18px;background:#808080"></div>
<div class="a" style="left:580px;top:431px;width:1px;height:126px;background:#808080"></div>
<div class="a" style="left:602px;top:395px;width:1px;height:18px;background:#808080"></div>
<div class="a" style="left:602px;top:431px;width:1px;height:126px;background:#808080"></div>
<div class="a" style="left:624px;top:395px;width:1px;height:18px;background:#808080"></div>
<div class="a" style="left:624px;top:431px;width:1px;height:126px;background:#808080"></div>
<div class="a" style="left:646px;top:395px;width:1px;height:18px;background:#808080"></div>
<div class="a" style="left:646px;top:431px;width:1px;height:126px;background:#808080"></div>
<div class="a" style="left:668px;top:395px;width:1px;height:18px;background:#808080"></div>
<div class="a" style="left:668px;top:431px;width:1px;height:126px;background:#808080"></div>
<div class="a" style="left:690px;top:395px;width:1px;height:18px;background:#808080"></div>
<div class="a" style="left:690px;top:431px;width:1px;height:126px;background:#808080"></div>
<div class="a" style="left:712px;top:395px;width:1px;height:18px;background:#808080"></div>
<div class="a" style="left:712px;top:431px;width:1px;height:126px;background:#808080"></div>
<div class="a" style="left:734px;top:395px;width:1px;height:18px;background:#808080"></div>
<div class="a" style="left:734px;top:431px;width:1px;height:126px;background:#808080"></div>
<div class="a" style="left:756px;top:395px;width:1px;height:18px;background:#808080"></div>
<div class="a" style="left:756px;top:431px;width:1px;height:126px;background:#808080"></div>
<div class="a" style="left:778px;top:395px;width:1px;height:18px;background:#808080"></div>
<div class="a" style="left:778px;top:431px;width:1px;height:126px;background:#808080"></div>
<div class="a" style="left:800px;top:395px;width:1px;height:18px;background:#808080"></div>
<div class="a" style="left:800px;top:413px;width:1px;height:18px;background:#808080"></div>
<div class="a" style="left:800px;top:431px;width:1px;height:126px;background:#808080"></div>
<div class="a" style="left:822px;top:395px;width:1px;height:18px;background:#808080"></div>
<div class="a" style="left:822px;top:413px;width:1px;height:18px;background:#808080"></div>
<div class="a" style="left:822px;top:431px;width:1px;height:126px;background:#808080"></div>
<div class="a" style="left:844px;top:395px;width:1px;height:18px;background:#808080"></div>
<div class="a" style="left:844px;top:413px;width:1px;height:18px;background:#808080"></div>
<div class="a" style="left:844px;top:431px;width:1px;height:126px;background:#808080"></div>
<div class="a" style="left:866px;top:395px;width:1px;height:18px;background:#808080"></div>
<div class="a" style="left:866px;top:413px;width:1px;height:18px;background:#808080"></div>
<div class="a" style="left:866px;top:431px;width:1px;height:126px;background:#808080"></div>
<div class="a" style="left:888px;top:395px;width:1px;height:18px;background:#808080"></div>
<div class="a" style="left:888px;top:413px;width:1px;height:18px;background:#808080"></div>
<div class="a" style="left:888px;top:431px;width:1px;height:126px;background:#808080"></div>
<div class="a" style="left:910px;top:395px;width:1px;height:18px;background:#808080"></div>
<div class="a" style="left:910px;top:413px;width:1px;height:18px;background:#808080"></div>
<div class="a" style="left:910px;top:431px;width:1px;height:126px;background:#808080"></div>
<div class="a" style="left:932px;top:395px;width:1px;height:18px;background:#808080"></div>
<div class="a" style="left:932px;top:413px;width:1px;height:18px;background:#808080"></div>
<div class="a" style="left:932px;top:431px;width:1px;height:126px;background:#808080"></div>
<div class="a" style="left:954px;top:395px;width:1px;height:18px;background:#808080"></div>
<div class="a" style="left:954px;top:413px;width:1px;height:18px;background:#808080"></div>
<div class="a" style="left:954px;top:431px;width:1px;height:126px;background:#808080"></div>
<div class="a" style="left:976px;top:395px;width:1px;height:18px;background:#808080"></div>
<div class="a" style="left:976px;top:413px;width:1px;height:18px;background:#808080"></div>
<div class="a" style="left:976px;top:431px;width:1px;height:126px;background:#808080"></div>
<div class="a" style="left:998px;top:395px;width:1px;height:18px;background:#808080"></div>
<div class="a" style="left:998px;top:413px;width:1px;height:18px;background:#808080"></div>
<div class="a" style="left:998px;top:431px;width:1px;height:126px;background:#808080"></div>
<div class="a" style="left:1020px;top:395px;width:1px;height:18px;background:#808080"></div>
<div class="a" style="left:1020px;top:413px;width:1px;height:18px;background:#808080"></div>
<div class="a" style="left:1020px;top:431px;width:1px;height:126px;background:#808080"></div>
<div class="a" style="left:1042px;top:395px;width:1px;height:18px;background:#808080"></div>
<div class="a" style="left:1042px;top:413px;width:1px;height:18px;background:#808080"></div>
<div class="a" style="left:1042px;top:431px;width:1px;height:126px;background:#808080"></div>
<div class="a" style="left:1064px;top:395px;width:1px;height:18px;background:#808080"></div>
<div class="a" style="left:1064px;top:413px;width:1px;height:18px;background:#808080"></div>
<div class="a" style="left:1064px;top:431px;width:1px;height:126px;background:#808080"></div>
<div class="a" style="left:1086px;top:395px;width:1px;height:18px;background:#808080"></div>
<div class="a" style="left:1086px;top:413px;width:1px;height:18px;background:#808080"></div>
<div class="a" style="left:1086px;top:431px;width:1px;height:126px;background:#808080"></div>
<div class="a" style="left:1108px;top:395px;width:1px;height:18px;background:#808080"></div>
<div class="a" style="left:1108px;top:413px;width:1px;height:18px;background:#808080"></div>
<div class="a" style="left:1108px;top:431px;width:1px;height:126px;background:#808080"></div>
<div class="a" style="left:1130px;top:395px;width:1px;height:18px;background:#808080"></div>
<div class="a" style="left:1130px;top:413px;width:1px;height:18px;background:#808080"></div>
<div class="a" style="left:1130px;top:431px;width:1px;height:126px;background:#808080"></div>
<div class="a" style="left:1152px;top:395px;width:1px;height:18px;background:#808080"></div>
<div class="a" style="left:1152px;top:413px;width:1px;height:18px;background:#808080"></div>
<div class="a" style="left:1152px;top:431px;width:1px;height:126px;background:#808080"></div>
<div class="t" style="left:491px;top:417px;width:309px;text-align:center;font-size:11px">Sommer</div>
</body></html>
